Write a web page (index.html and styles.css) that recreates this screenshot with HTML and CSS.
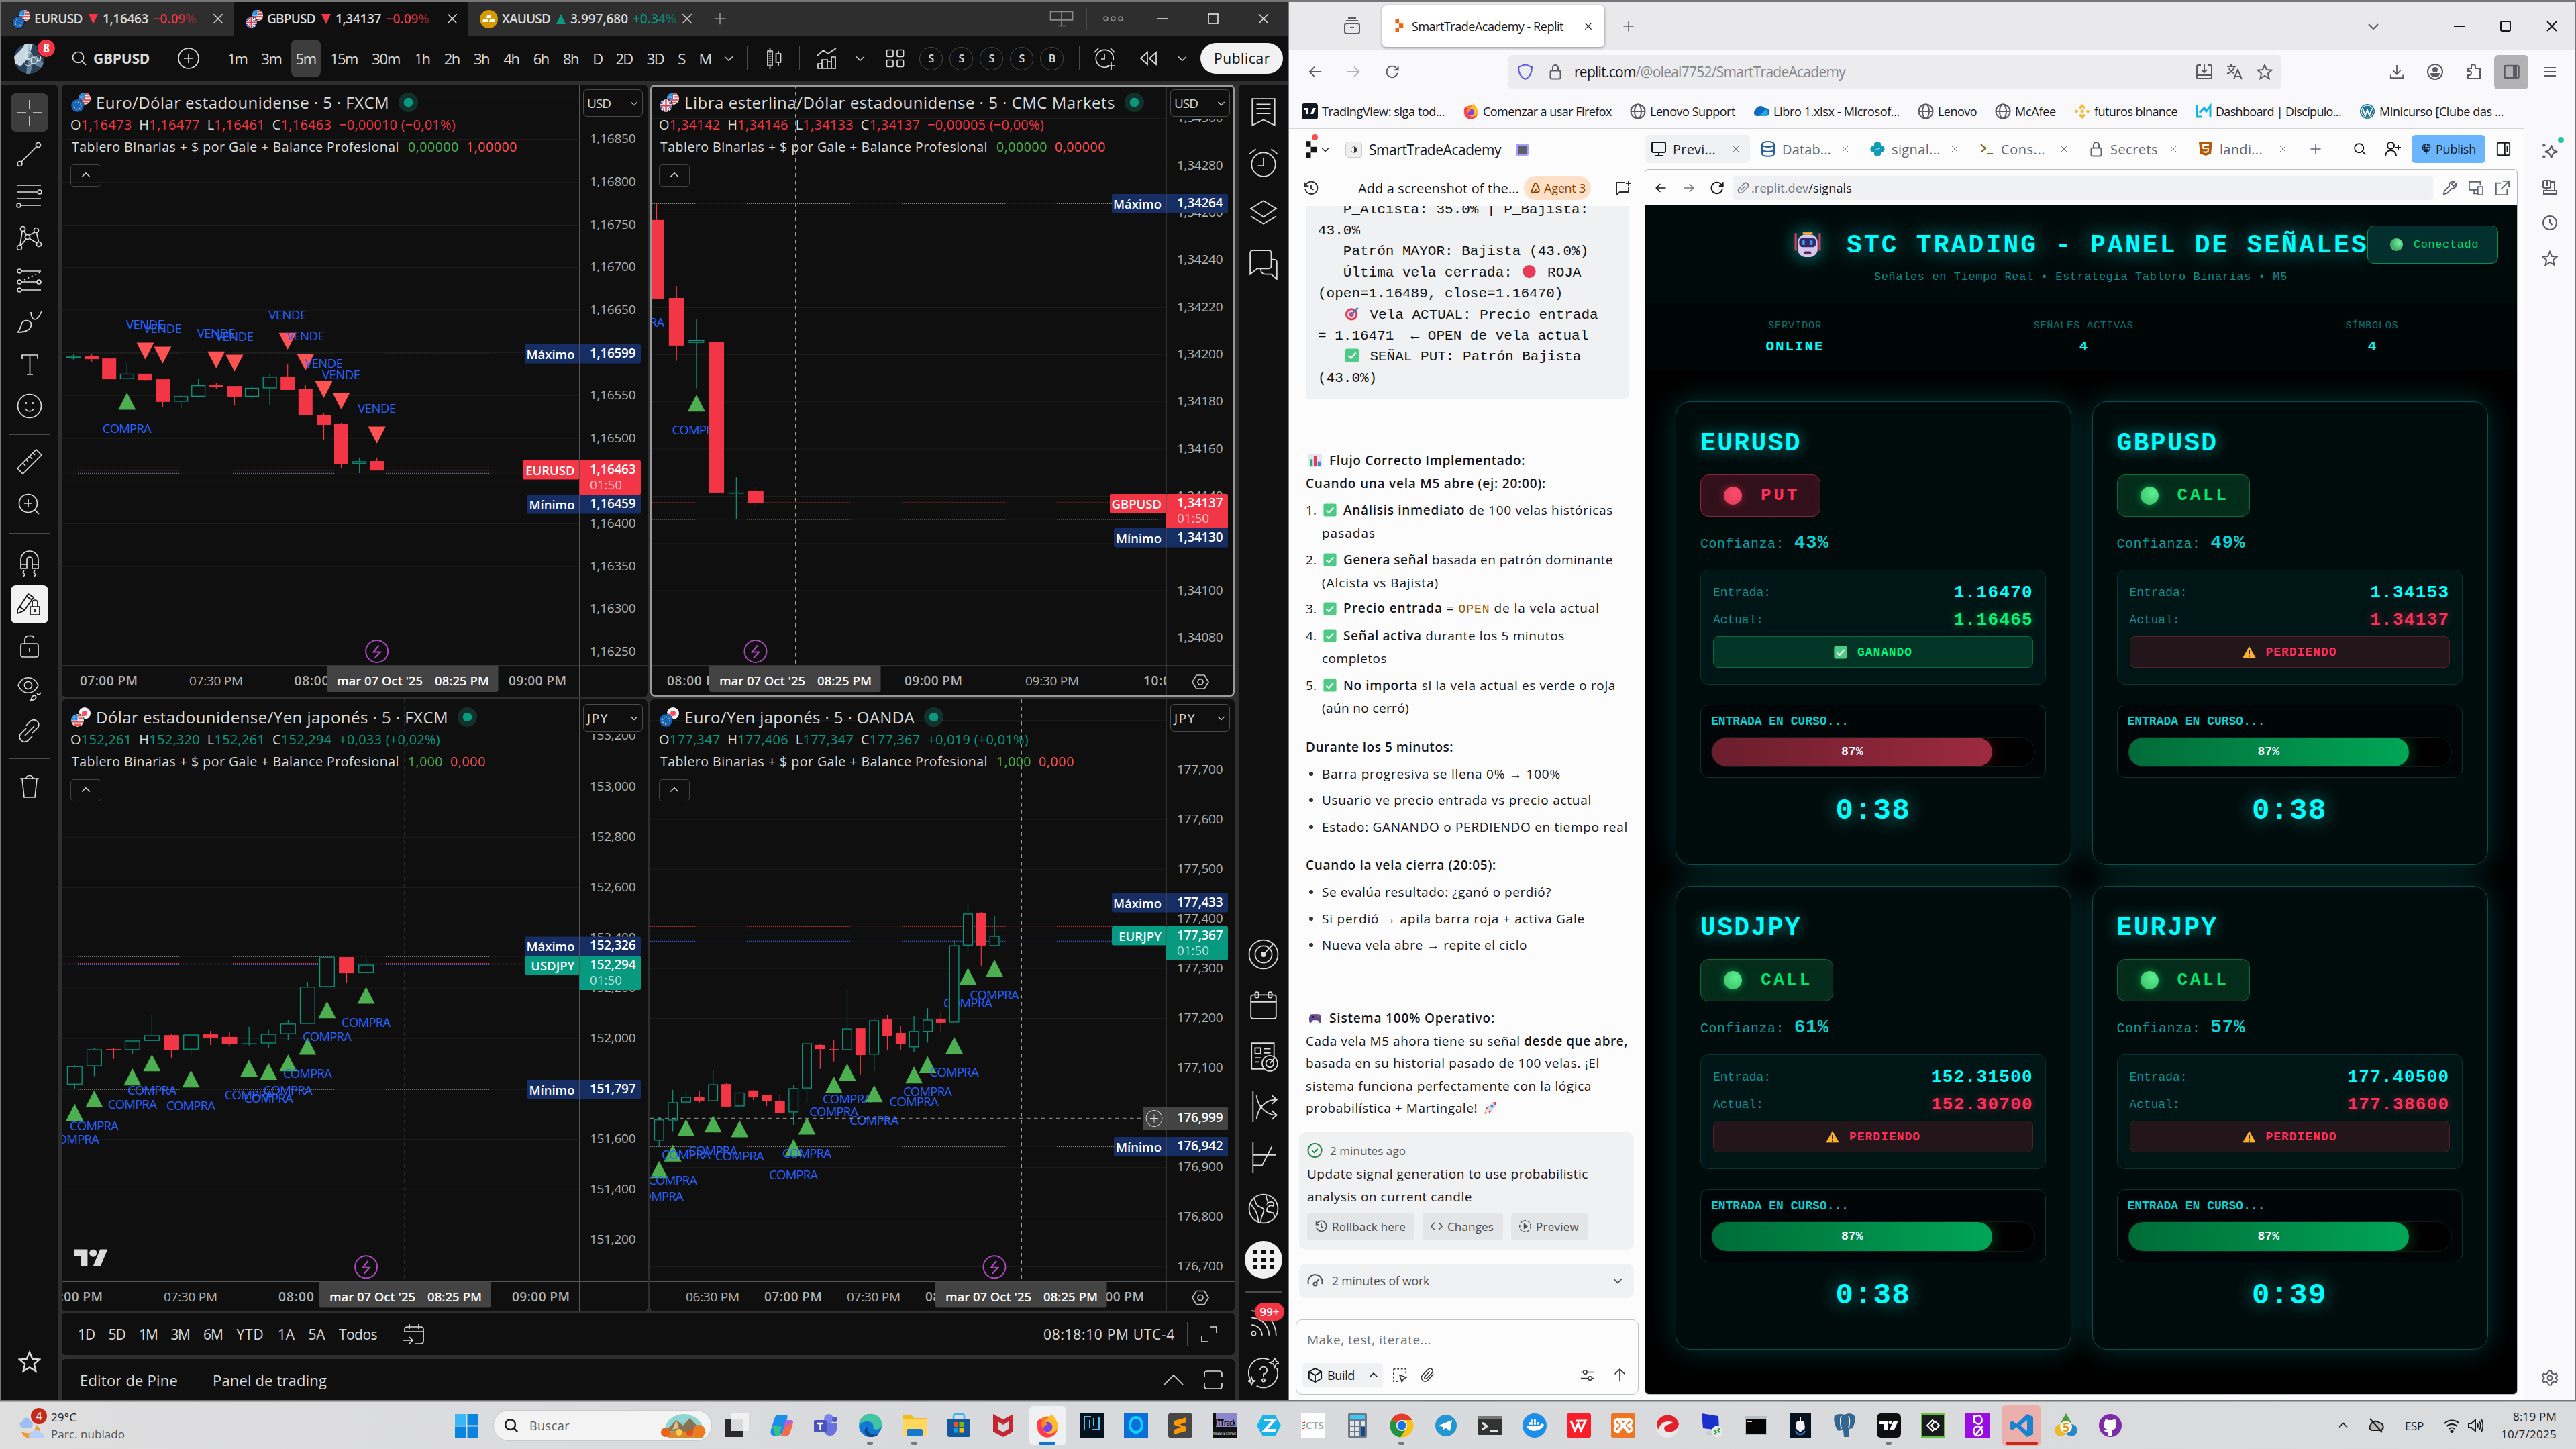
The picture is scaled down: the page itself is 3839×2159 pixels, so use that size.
FILE: index.html
```html
<!DOCTYPE html>
<html lang="es">
<head>
<meta charset="utf-8">
<title>Escritorio de trading</title>
<link rel="stylesheet" href="styles.css">
</head>
<body>
<svg class="defs" width="0" height="0">
<symbol id="x" viewBox="0 0 24 24"><path d="M4 4L20 20M20 4L4 20"/></symbol>
<symbol id="plus" viewBox="0 0 24 24"><path d="M12 2V22M2 12H22"/></symbol>
<symbol id="down" viewBox="0 0 24 24"><path d="M5 9L12 16L19 9"/></symbol>
<symbol id="up" viewBox="0 0 24 24"><path d="M5 15L12 8L19 15"/></symbol>
<symbol id="search" viewBox="0 0 24 24"><circle cx="10.5" cy="10.5" r="8"/><path d="M16 16L22 22"/></symbol>
<symbol id="addc" viewBox="0 0 32 32"><circle cx="16" cy="16" r="15"/><path d="M16 9V23M9 16H23"/></symbol>
<symbol id="left" viewBox="0 0 24 24"><path d="M22 12H3M11 4L3 12L11 20"/></symbol>
<symbol id="right" viewBox="0 0 24 24"><path d="M2 12H21M13 4L21 12L13 20"/></symbol>
<symbol id="reload" viewBox="0 0 24 24"><path d="M20.5 14A9 9 0 1 1 18.5 6L21 8.500M21.500 2.500V9H15"/></symbol>
<symbol id="star" viewBox="0 0 24 24"><path d="M12 2L15 9L22.500 9.600L16.800 14.500L18.600 22L12 18L5.400 22L7.200 14.500L1.500 9.600L9 9Z"/></symbol>
<symbol id="lock" viewBox="0 0 24 24"><rect x="4.500" y="10.500" width="15" height="12" rx="2"/><path d="M8 10V6A4 4 0 0 1 16 6V10"/></symbol>
<symbol id="globe" viewBox="0 0 24 24"><circle cx="12" cy="12" r="10.500"/><ellipse cx="12" cy="12" rx="5" ry="10.500"/><path d="M1.500 12H22.500"/></symbol>
<symbol id="gear" viewBox="0 0 24 24"><circle cx="12" cy="12" r="3.500"/><path d="M10 1.500H14L15 5L18 6.600L21.300 5.600L23 9L20.500 12L23 15L21.300 18.400L18 17.400L15 19L14 22.500H10L9 19L6 17.400L2.700 18.400L1 15L3.500 12L1 9L2.700 5.600L6 6.600L9 5Z"/></symbol>
<symbol id="history" viewBox="0 0 24 24"><path d="M3 8A10 10 0 1 1 2.500 14M2 3V9H8M12 7V13L16 15"/></symbol>
<symbol id="clock" viewBox="0 0 24 24"><circle cx="12" cy="12" r="10"/><path d="M12 6V12L15.500 15"/></symbol>
<symbol id="sparkle" viewBox="0 0 24 24"><path d="M14 4C15 10 17 12 22.500 13C17 14 15 16 14 22C13 16 11 14 5.500 13C11 12 13 10 14 4Z"/><path d="M4 2V6M2 4H6M4 18V22M2 20H6"/></symbol>
<symbol id="us" viewBox="0 0 20 20"><circle cx="10" cy="10" r="10" fill="#f4f4f6"/><path d="M10 2.500H16.500M11 7H19.500M11 12H19.500M2 12H11M4 16.500H16" stroke="#ef5350" stroke-width="2.600"/><path d="M10 0V10H0A10 10 0 0 1 10 0Z" fill="#1e88e5"/><path d="M3 6H9M5 3.500H9M3 8.500H9" stroke="#9fd0f5" stroke-width="1" stroke-dasharray="1 1"/></symbol>
<symbol id="eu" viewBox="0 0 20 20"><circle cx="10" cy="10" r="10" fill="#1565c0"/><circle cx="10" cy="10" r="5.500" fill="none" stroke="#ffeb3b" stroke-width="1.500" stroke-dasharray="1.400 2.900"/></symbol>
<symbol id="gb" viewBox="0 0 20 20"><circle cx="10" cy="10" r="10" fill="#1e5fb4"/><path d="M3 3L17 17M17 3L3 17" stroke="#fff" stroke-width="3"/><path d="M3 3L17 17M17 3L3 17" stroke="#e5404a" stroke-width="1"/><path d="M10 0V20M0 10H20" stroke="#fff" stroke-width="5"/><path d="M10 0V20M0 10H20" stroke="#e5404a" stroke-width="2.600"/></symbol>
<symbol id="jp" viewBox="0 0 20 20"><circle cx="10" cy="10" r="10" fill="#f4f4fa"/><circle cx="10" cy="10" r="4.500" fill="#f7525f"/></symbol>
<symbol id="ok" viewBox="0 0 24 24"><rect x="0.500" y="0.500" width="23" height="23" rx="3" fill="#4ccb85"/><path d="M5.500 12.500L10 17L18.500 7.500" fill="none" stroke="#fff" stroke-width="2.600"/></symbol>
<symbol id="warn" viewBox="0 0 24 24"><path d="M12 2L23 21.500H1Z" fill="#ffb02e" stroke="#ffb02e"/><path d="M12 8.500V15.500M12 17.500V20" stroke="#212121" stroke-width="2.400"/></symbol>
<symbol id="tv" viewBox="0 0 36 28"><path d="M14 22H7V11H0V4H14ZM28 22H20L27.500 4H35.500Z" fill="currentColor"/><circle cx="20" cy="8" r="4" fill="currentColor"/></symbol>
<symbol id="fox" viewBox="0 0 36 36"><circle cx="18" cy="20" r="15.500" fill="#ff7a1f"/><path d="M3 16C4 28 9 35.500 18 35.500S33.500 29 33.500 20C33.500 12 28 4 23 0C23 6 18 7 15 11Z" fill="#ffbd2e"/><path d="M3 12C2 26 8 35.500 18 35.500C27 35.500 32 29 32.500 23C29 30 22 31 17 29C10 26 9 18 12 12L6 8Z" fill="#ff3b56"/><circle cx="18" cy="20" r="7.500" fill="#7a45e6"/><path d="M9 13C14 11 18 14 18 17C15 17 13 19 12 22C9 19 8 16 9 13Z" fill="#ff8a1f"/></symbol>
<symbol id="replit" viewBox="0 0 16 24"><path d="M1 0H8V8H1ZM8 8H16V16H8ZM1 16H8V24H1Z" fill="currentColor"/></symbol>
</svg>
<div class="desktop">

<section class="tvwin">
  <header class="tabs">
    <div class="tab"><span class="pair"><svg><use href="#us"/></svg><svg><use href="#eu"/></svg></span><b class="sym" data-w="72">EURUSD</b><i class="tri dn"></i><b data-w="68">1,16463</b><b class="pct red" data-w="65">−0.09%</b><svg class="ic close"><use href="#x"/></svg></div>
    <div class="tab on"><span class="pair"><svg><use href="#us"/></svg><svg><use href="#gb"/></svg></span><b class="sym" data-w="72">GBPUSD</b><i class="tri dn"></i><b data-w="68">1,34137</b><b class="pct red" data-w="65">−0.09%</b><svg class="ic close"><use href="#x"/></svg></div>
    <div class="tab third"><svg class="gold" viewBox="0 0 27 27"><circle cx="13.500" cy="13.500" r="13.500" fill="#d69a00"/><path d="M10 12L11 8H16L17 12ZM4 18L5 14H12L13 18ZM14 18L15 14H22L23 18Z" fill="#fff"/></svg><b class="sym" data-w="72">XAUUSD</b><i class="tri upw"></i><b data-w="86">3.997,680</b><b class="pct teal" data-w="65">+0.34%</b><svg class="ic close"><use href="#x"/></svg></div>
    <i class="vsep h32"></i><svg class="ic s20 dim newtab"><use href="#plus"/></svg>
    <div class="wctl"><svg class="ic" width="36" height="24" viewBox="0 0 36 24"><path d="M1.500 1.500H34.500V14H1.500ZM18 1.500V22M12 22.500H24M1.500 13H34"/></svg><i class="vsep h32"></i><svg class="ic dots" width="30" height="10" viewBox="0 0 30 10"><circle cx="4" cy="5" r="3"/><circle cx="15" cy="5" r="3"/><circle cx="26" cy="5" r="3"/></svg><svg class="ic lite" width="16" height="16" viewBox="0 0 16 16"><path d="M0 8H16"/></svg><svg class="ic lite" width="16" height="16" viewBox="0 0 16 16"><rect x="1" y="1" width="14" height="14"/></svg><svg class="ic lite" width="16" height="16" viewBox="0 0 16 16"><path d="M1 1L15 15M15 1L1 15"/></svg></div>
  </header>

  <div class="bar">
    <div class="avatar"><svg viewBox="0 0 45 45"><circle cx="22.500" cy="22.500" r="22.500" fill="#2b4358"/><path d="M0 20C6 12 12 10 16 0H28L22 20L10 34L2 30Z" fill="#c9d8e2"/><path d="M22 0L26 18L36 20L44 30L40 36L28 30L24 45H18L20 28Z" fill="#7e9bb0" opacity=".7"/><g fill="none" stroke="#e9f3fa" stroke-width="1"><circle cx="22" cy="18" r="5"/><circle cx="30" cy="25" r="5"/><circle cx="21" cy="28" r="5"/><circle cx="36" cy="22" r="4"/></g></svg><em>8</em></div>
    <svg class="ic s24 srch"><use href="#search"/></svg><b class="tick" data-w="84">GBPUSD</b>
    <svg class="ic plusc"><use href="#addc"/></svg><i class="vsep h36 sa"></i>
    <nav class="tf"><span data-w="29">1m</span><span data-w="30">3m</span><span class="on" data-w="30">5m</span><span data-w="41">15m</span><span data-w="42">30m</span><span data-w="23">1h</span><span data-w="23">2h</span><span data-w="23">3h</span><span data-w="23">4h</span><span data-w="23">6h</span><span data-w="23">8h</span><span data-w="13">D</span><span data-w="25">2D</span><span data-w="25">3D</span><span data-w="10">S</span><span data-w="16">M</span></nav>
    <svg class="ic s20 c1"><use href="#down"/></svg><i class="vsep h36 sb"></i>
    <svg class="ic cndl" width="24" height="32" viewBox="0 0 24 32"><path d="M5.500 0V5M5.500 27V32M2 5H9V27H2ZM18 5V9M18 22V27M14.500 9H21.500V22H14.500Z"/><path d="M5.500 6V26" stroke-width="4" stroke-dasharray="1.500 1.500"/></svg><i class="vsep h36 sc"></i>
    <svg class="ic indi" width="32" height="32" viewBox="0 0 32 32"><path d="M2 12L11 4L18 9L30 1M3 31V24H9V31M9 31V18H17V31M17 31V21H23V31M23 31V14H29V31ZM2 31H30"/></svg><svg class="ic s20 c2"><use href="#down"/></svg>
    <svg class="ic grid4" width="28" height="28" viewBox="0 0 28 28"><rect x="1.500" y="1.500" width="9.500" height="10" rx="2"/><rect x="17" y="1.500" width="9.500" height="10" rx="2"/><rect x="1.500" y="16.500" width="9.500" height="10" rx="2"/><rect x="17" y="16.500" width="9.500" height="10" rx="2"/></svg>
    <div class="rounds"><b>S</b><b>S</b><b>S</b><b>S</b><b>B</b></div><i class="vsep h36 sd"></i>
    <svg class="ic alrm" width="34" height="34" viewBox="0 0 34 34"><path d="M22 29A13 13 0 1 1 29 20M16 10V18H11M1 8L7 2M25 2L31 8M26 22V34M20 28H32"/></svg>
    <svg class="ic rew" width="28" height="22" viewBox="0 0 28 22"><path d="M12 2V20L2 11ZM25 2V20L15 11Z"/></svg><svg class="ic s20 c3"><use href="#down"/></svg>
    <button class="pub"><span data-w="84">Publicar</span></button>
  </div>

  <div class="main">
    <aside class="tools">
      <span class="slot on"><svg class="ic" viewBox="0 0 40 40"><path d="M20 1V15M20 25V39M1 20H15M25 20H39"/></svg></span>
      <span class="slot"><svg class="ic" viewBox="0 0 40 40"><circle cx="5.500" cy="34" r="3.500"/><circle cx="33" cy="6" r="3.500"/><path d="M8 31L30.500 8.500"/></svg></span>
      <span class="slot"><svg class="ic" viewBox="0 0 40 40"><path d="M2 4H37M2 14H32M2 24H37M7 34H37"/><circle cx="35" cy="14" r="3"/><circle cx="4" cy="34" r="3"/></svg></span>
      <span class="slot"><svg class="ic" viewBox="0 0 40 40"><circle cx="10" cy="6" r="3.500"/><circle cx="30" cy="8" r="3.500"/><circle cx="17" cy="18" r="3.500"/><circle cx="34" cy="29" r="3.500"/><circle cx="5" cy="34" r="3.500"/><path d="M9 10L6 30M28 11L19.500 15M20 20.500L31 27M30.500 12L33.500 25M15 21L7 31M12 9L15 15"/></svg></span>
      <span class="slot"><svg class="ic" viewBox="0 0 40 40"><circle cx="5" cy="6" r="3"/><circle cx="5" cy="22" r="3"/><circle cx="34" cy="22" r="3"/><circle cx="5" cy="34" r="3"/><path d="M8 6H37M8 22H31M8 34H37"/><path d="M12 19L35 8" stroke-dasharray="2 4"/></svg></span>
      <span class="slot"><svg class="ic" viewBox="0 0 40 40"><path d="M2 35C6 33 6 27 9 21C12 16 19 17 22 21C24 29 18 35 2 35ZM22 5C22 12 25 16 28 16C32 16 35 11 38 4"/></svg></span>
      <span class="slot"><svg class="ic" viewBox="0 0 40 40"><path d="M9 12V6H32V12M20.500 6V35M16 35H25"/></svg></span>
      <span class="slot"><svg class="ic" viewBox="0 0 40 40"><circle cx="20" cy="20" r="17.500"/><path d="M15 14V17M25 14V17M14 24C16 29 24 29 26 24"/></svg></span>
      <i class="hsep"></i>
      <span class="slot"><svg class="ic" viewBox="0 0 40 40"><path d="M2 30L30 2L38 10L10 38ZM10 22L14 26M15 17L18 20M20 12L24 16M25 7L28 10"/></svg></span>
      <span class="slot"><svg class="ic" viewBox="0 0 40 40"><circle cx="18" cy="19" r="13.500"/><path d="M28 29L34 35M18 13V25M12 19H24"/></svg></span>
      <i class="hsep tall"></i>
      <span class="slot"><svg class="ic" viewBox="0 0 40 40"><path d="M7 27V14A13 13 0 0 1 33 14V27H24V14A4 4 0 0 0 16 14V27ZM7 21H16M24 21H33M12 30L10 33L13 36L11 39M28 30L26 33L29 36L27 39"/></svg></span>
      <span class="slot lit"><svg class="ic" viewBox="0 0 40 40"><path d="M2 28L18 4L26 9L12 29L2 33ZM5 23L12 28M16 8L24 13M21 23H35V35H21ZM24 23V17A4 4 0 0 1 32 17V23M28 27V31"/></svg></span>
      <span class="slot"><svg class="ic" viewBox="0 0 40 40"><rect x="7" y="15" width="26" height="20" rx="3"/><path d="M13 15V9C13 2 25 2 27 7M20 22V28"/></svg></span>
      <span class="slot"><svg class="ic" viewBox="0 0 40 40"><path d="M3 15C10 0 26 0 33 15C26 30 10 30 3 15Z"/><circle cx="18" cy="15" r="5.500"/><path d="M21 38C24 36 22 31 27 30C31 31 32 36 21 38ZM31 27C33 30 35 29 37 26"/></svg></span>
      <span class="slot"><svg class="ic" viewBox="0 0 40 40"><path d="M15 12L22 5C28 1 36 7 33 14L24 23M24 28L17 35C10 39 3 32 6 25L15 16M13 27L27 13"/></svg></span>
      <i class="hsep"></i>
      <span class="slot"><svg class="ic" viewBox="0 0 40 40"><path d="M6 8H34M9 8L12 36H28L31 8M15 8C15 2 25 2 25 8"/></svg></span>
      <span class="slot fav"><svg class="ic"><use href="#star"/></svg></span>
    </aside>

    <div class="center">
      <div class="charts">
        <article class="pane"><svg class="plot" data-chart="eurusd"></svg><div class="legend"><h3><span class="pair"><svg><use href="#us"/></svg><svg><use href="#eu"/></svg></span><span data-w="437">Euro/Dólar estadounidense · 5 · FXCM</span><i class="live"></i></h3><p class="red" data-w="574"><u>O</u>1,16473 &nbsp;<u>H</u>1,16477 &nbsp;<u>L</u>1,16461 &nbsp;<u>C</u>1,16463 &nbsp;−0,00010 (−0,01%)</p><p class="ind"><span data-w="488">Tablero Binarias + $ por Gale + Balance Profesional</span><span class="grn" data-w="76">0,00000</span><span class="rd2" data-w="76">1,00000</span></p><span class="fold"><svg class="ic s20"><use href="#up"/></svg></span></div><span class="cur"><span data-w="35">USD</span><svg class="ic s16"><use href="#down"/></svg></span></article>
        <article class="pane sel"><svg class="plot" data-chart="gbpusd"></svg><div class="legend"><h3><span class="pair"><svg><use href="#us"/></svg><svg><use href="#gb"/></svg></span><span data-w="642">Libra esterlina/Dólar estadounidense · 5 · CMC Markets</span><i class="live"></i></h3><p class="red" data-w="574"><u>O</u>1,34142 &nbsp;<u>H</u>1,34146 &nbsp;<u>L</u>1,34133 &nbsp;<u>C</u>1,34137 &nbsp;−0,00005 (−0,00%)</p><p class="ind"><span data-w="488">Tablero Binarias + $ por Gale + Balance Profesional</span><span class="grn" data-w="76">0,00000</span><span class="rd2" data-w="76">0,00000</span></p><span class="fold"><svg class="ic s20"><use href="#up"/></svg></span></div><span class="cur"><span data-w="35">USD</span><svg class="ic s16"><use href="#down"/></svg></span></article>
        <article class="pane"><svg class="plot" data-chart="usdjpy"></svg><div class="legend"><h3><span class="pair"><svg><use href="#jp"/></svg><svg><use href="#us"/></svg></span><span data-w="525">Dólar estadounidense/Yen japonés · 5 · FXCM</span><i class="live"></i></h3><p class="teal" data-w="551"><u>O</u>152,261 &nbsp;<u>H</u>152,320 &nbsp;<u>L</u>152,261 &nbsp;<u>C</u>152,294 &nbsp;+0,033 (+0,02%)</p><p class="ind"><span data-w="488">Tablero Binarias + $ por Gale + Balance Profesional</span><span class="grn" data-w="52">1,000</span><span class="rd2" data-w="53">0,000</span></p><span class="fold"><svg class="ic s20"><use href="#up"/></svg></span></div><span class="cur"><span data-w="32">JPY</span><svg class="ic s16"><use href="#down"/></svg></span></article>
        <article class="pane"><svg class="plot" data-chart="eurjpy"></svg><div class="legend"><h3><span class="pair"><svg><use href="#jp"/></svg><svg><use href="#eu"/></svg></span><span data-w="343">Euro/Yen japonés · 5 · OANDA</span><i class="live"></i></h3><p class="teal" data-w="551"><u>O</u>177,347 &nbsp;<u>H</u>177,406 &nbsp;<u>L</u>177,347 &nbsp;<u>C</u>177,367 &nbsp;+0,019 (+0,01%)</p><p class="ind"><span data-w="488">Tablero Binarias + $ por Gale + Balance Profesional</span><span class="grn" data-w="52">1,000</span><span class="rd2" data-w="53">0,000</span></p><span class="fold"><svg class="ic s20"><use href="#up"/></svg></span></div><span class="cur"><span data-w="32">JPY</span><svg class="ic s16"><use href="#down"/></svg></span></article>
      </div>
      <div class="ranges"><span data-w="25">1D</span><span data-w="25">5D</span><span data-w="27">1M</span><span data-w="28">3M</span><span data-w="29">6M</span><span data-w="41">YTD</span><span data-w="25">1A</span><span data-w="25">5A</span><span data-w="57">Todos</span><i class="vsep h36"></i><svg class="ic" width="32" height="32" viewBox="0 0 32 32"><path d="M2 13V9Q2 5 6 5H26Q30 5 30 9V26Q30 30 26 30H17M2 12H30M9 1V8M23 1V8M0 25H13M9 20L14 25L9 30"/></svg><span class="clock" data-w="196">08:18:10 PM UTC-4</span><i class="vsep h36"></i><svg class="ic" width="24" height="24" viewBox="0 0 24 24"><path d="M14 1H23V10M1 14V23H10"/></svg></div>
      <div class="dock"><span data-w="146">Editor de Pine</span><span data-w="170">Panel de trading</span><svg class="ic" width="30" height="16" viewBox="0 0 30 16"><path d="M1 15L15 1L29 15"/></svg><svg class="ic" width="28" height="28" viewBox="0 0 28 28"><path d="M1 9V5Q1 1 5 1H23Q27 1 27 5V9M1 19V23Q1 27 5 27H23Q27 27 27 23V19"/></svg></div>
    </div>

    <aside class="widgets">
      <span class="slot"><svg class="ic" viewBox="0 0 44 44"><path d="M6 3H38V41L22 33L6 41ZM12 11H32M12 17H32M12 24H32"/></svg></span>
      <span class="slot"><svg class="ic" viewBox="0 0 44 44"><circle cx="22" cy="24" r="17"/><path d="M22 14V26H14M2 9L11 2M33 2L42 9"/></svg></span>
      <span class="slot"><svg class="ic" viewBox="0 0 44 44"><path d="M22 4L40 15L22 27L4 15ZM4 26L22 37L40 26"/></svg></span>
      <span class="slot"><svg class="ic" viewBox="0 0 44 44"><path d="M3 36V6Q3 2 7 2H29Q33 2 33 6V24Q33 28 29 28H13ZM33 15H36Q41 15 41 19V43L33 36H25Q18 36 18 28"/></svg></span>
      <span class="slot far"><svg class="ic" viewBox="0 0 44 44"><circle cx="22" cy="22" r="20.500"/><circle cx="22" cy="22" r="12"/><circle cx="22" cy="22" r="3" fill="currentColor"/><path d="M22 22L36 7"/></svg></span>
      <span class="slot"><svg class="ic" viewBox="0 0 44 44"><path d="M4 10Q4 7 8 7H36Q40 7 40 10V38Q40 41 36 41H8Q4 41 4 38ZM4 17H40"/><rect x="10" y="3" width="5" height="8" rx="2"/><rect x="29" y="3" width="5" height="8" rx="2"/></svg></span>
      <span class="slot"><svg class="ic" viewBox="0 0 44 44"><path d="M22 40H5V3H37V22M10 10H18V18H10ZM22 11H32M22 17H32M10 24H18M10 30H16"/><circle cx="31" cy="32" r="11"/><circle cx="31" cy="32" r="5.500"/><path d="M31 32L38 24"/></svg></span>
      <span class="slot"><svg class="ic" viewBox="0 0 44 44"><path d="M7 0V44M12 6C14 24 28 34 40 34M12 40C14 26 22 12 40 12M34 6L41 12L34 18M34 28L41 34L34 40"/></svg></span>
      <span class="slot"><svg class="ic" viewBox="0 0 44 44"><path d="M7 0V44M7 18H40M7 33H20L34 6"/></svg></span>
      <span class="slot"><svg class="ic" viewBox="0 0 44 44"><circle cx="22" cy="22" r="20.500"/><path d="M8 7C12 12 10 16 14 18L22 22C24 28 18 30 18 42M3 14C8 22 10 22 12 28C14 32 14 36 15 41M26 3C24 8 30 10 28 14C34 10 38 14 36 18C30 16 26 20 27 26L36 28L38 34"/></svg></span>
      <span class="slot"><svg class="apps" viewBox="0 0 56 56"><circle cx="28" cy="28" r="28" fill="#f0f0f0"/><path d="M13 17H19M25 17H31M37 17H43M13 28H19M25 28H31M37 28H43M13 39H19M25 39H31M37 39H43" stroke="#0f0f0f" stroke-width="6"/></svg></span>
      <i class="hsep w"></i>
      <span class="slot feed"><svg class="ic" viewBox="0 0 44 44"><circle cx="8" cy="37" r="3"/><path d="M5 25A15 15 0 0 1 20 40M5 15A25 25 0 0 1 30 40M5 5A35 35 0 0 1 40 40"/></svg><em>99+</em></span>
      <span class="slot help"><svg class="ic" viewBox="0 0 44 44"><path d="M30 3A20.500 20.500 0 0 0 3 31M12 40A20.500 20.500 0 0 0 41 15M17 18A5 5 0 1 1 22 23V27"/><circle cx="22" cy="32" r="2"/><path d="M38 0L40 5L45 7L40 9L38 14L36 9L31 7L36 5ZM5 28L6.500 32L10 33L6.500 34.500L5 38L3.500 34.500L0 33L3.500 32Z"/></svg></span>
    </aside>
  </div>
</section>

<section class="ffwin">
  <header class="fftabs">
    <svg class="ic k w2 vw" width="26" height="26" viewBox="0 0 26 26"><rect x="2" y="9" width="22" height="15" rx="3"/><path d="M4 5H22M7 1H19M10 15H16"/></svg><i class="lsep"></i>
    <div class="fftab"><svg class="rl"><use href="#replit"/></svg><span data-w="226">SmartTradeAcademy - Replit</span><svg class="ic w2 s12"><use href="#x"/></svg></div>
    <svg class="ic k s18 w2 np"><use href="#plus"/></svg>
    <div class="ffctl"><svg class="ic k w2 s24"><use href="#down"/></svg><svg class="ic w2" width="16" height="16" viewBox="0 0 16 16"><path d="M0 8H16"/></svg><svg class="ic w2" width="16" height="16" viewBox="0 0 16 16"><rect x="1" y="1" width="14" height="14" rx="2"/></svg><svg class="ic w2" width="16" height="16" viewBox="0 0 16 16"><path d="M1 1L15 15M15 1L1 15"/></svg></div>
  </header>
  <div class="ffnav">
    <svg class="ic k w2 s22 n1"><use href="#left"/></svg><svg class="ic k w2 s22 n2 faint"><use href="#right"/></svg><svg class="ic k w2 s22 n3"><use href="#reload"/></svg>
    <div class="url"><svg class="ic w2 shield" width="24" height="24" viewBox="0 0 24 24"><path d="M12 1L22 5C22 14 19 20 12 23C5 20 2 14 2 5Z"/></svg><svg class="ic k w2 s24"><use href="#lock"/></svg><span data-w="404">replit.com<u>/@oleal7752/SmartTradeAcademy</u></span>
      <span class="uright"><svg class="ic k w2 s24" viewBox="0 0 24 24"><path d="M7 2H3Q1 2 1 4V20Q1 22 3 22H21Q23 22 23 20V4Q23 2 21 2H17M1 17H23M12 0V12M8 9L12 13L16 9"/></svg><svg class="ic k w2 s24" viewBox="0 0 24 24"><path d="M1 4H14M7 1V4M12 4C11 10 6 13 1 15M4 7C5 11 9 14 12 14M11 23L17 9L23 23M13 19H21"/></svg><svg class="ic k w2 s24"><use href="#star"/></svg></span></div>
    <span class="uactions"><svg class="ic k w2 s22" viewBox="0 0 24 24"><path d="M12 1V15M6 10L12 16L18 10M2 17V22H22V17"/></svg><svg class="ic k w2 s24" viewBox="0 0 24 24"><circle cx="12" cy="12" r="11"/><circle cx="12" cy="9" r="3" fill="#5b5b66"/><path d="M6 15H18C17 20 7 20 6 15Z" fill="#5b5b66"/></svg><svg class="ic k w2 s24" viewBox="0 0 24 24"><path d="M3 7H8V4A3 3 0 0 1 14 4V7H21V22H3V17H5A3 3 0 0 0 5 11H3Z"/></svg><span class="sbtn"><svg class="ic k w3 s24" viewBox="0 0 24 24"><rect x="1.500" y="3" width="21" height="18" rx="2"/><path d="M17 4V20" stroke-width="6"/></svg></span><svg class="ic k w2 s20" viewBox="0 0 20 20"><path d="M1 4H19M1 10H19M1 16H19"/></svg></span>
  </div>
  <nav class="marks">
    <a><svg viewBox="0 0 24 24"><rect width="24" height="24" rx="4" fill="#131722"/><path d="M10 16H6V10H3V7H10ZM17 16H13L17 7H21Z" fill="#fff"/></svg><span data-w="183">TradingView: siga tod...</span></a>
    <a><svg><use href="#fox"/></svg><span data-w="192">Comenzar a usar Firefox</span></a>
    <a><svg class="ic k w2"><use href="#globe"/></svg><span data-w="127">Lenovo Support</span></a>
    <a><svg viewBox="0 0 24 24"><path d="M5 19A5 5 0 0 1 3 10A8 8 0 0 1 17 7A6 6 0 0 1 19 19Z" fill="#0f6cbd"/><path d="M8 19L19 9A6 6 0 0 1 19 19Z" fill="#28a8ea"/></svg><span data-w="188">Libro 1.xlsx - Microsof...</span></a>
    <a><svg class="ic k w2"><use href="#globe"/></svg><span data-w="58">Lenovo</span></a>
    <a><svg class="ic k w2"><use href="#globe"/></svg><span data-w="61">McAfee</span></a>
    <a><svg viewBox="0 0 24 24"><path d="M12 1L17 6L14.500 8.500L12 6L9.500 8.500L7 6ZM12 9L15 12L12 15L9 12ZM3.500 9L6.500 12L3.500 15L0.500 12ZM20.500 9L23.500 12L20.500 15L17.500 12ZM12 23L17 18L14.500 15.500L12 18L9.500 15.500L7 18Z" fill="#f3ba2f"/></svg><span data-w="124">futuros binance</span></a>
    <a><svg viewBox="0 0 24 24"><path d="M2 3V20H9M6 14L13 7L16 12L22 4V21" fill="none" stroke="#12b5ea" stroke-width="3"/></svg><span data-w="187">Dashboard | Discípulo...</span></a>
    <a><svg viewBox="0 0 24 24"><circle cx="12" cy="12" r="11" fill="#21759b"/><circle cx="12" cy="12" r="9" fill="none" stroke="#fff"/><path d="M5 8L9 18L12 10L15 18L19 8" fill="none" stroke="#fff" stroke-width="2"/></svg><span data-w="185">Minicurso [Clube das ...</span></a>
  </nav>

  <div class="ffbody">
    <div class="replit">
      <section class="agent">
        <div class="ahead"><span class="rlogo"><svg><use href="#replit"/></svg><i></i></span><svg class="ic w2 s16"><use href="#down"/></svg><span class="appi"><i></i></span><span class="name" data-w="197">SmartTradeAcademy</span><i class="cube"></i></div>
        <div class="ahead2"><svg class="ic w2 s22 kk"><use href="#history"/></svg><span class="ttl" data-w="240">Add a screenshot of the...</span><span class="abadge"><svg class="ic w2 s18" viewBox="0 0 20 20"><path d="M3 17L9 3Q11 1 13 4L17 14M3 17H12Q16 17 17 14M9 17Q9 13 13 12"/></svg><span data-w="62">Agent 3</span></span><svg class="ic w2 s24 kk cm" viewBox="0 0 24 24"><path d="M14 4H2V22L7 18H20V11M20 1V9M16 5H24"/></svg></div>
        <div class="chat">
          <pre class="code"><span>   P_Alcista: 35.0% | P_Bajista:
43.0%
   Patrón MAYOR: Bajista (43.0%)
   Última vela cerrada: <i class="e"><svg viewBox="0 0 24 24"><circle cx="12" cy="12" r="11" fill="#e8395a"/></svg></i> ROJA
(open=1.16489, close=1.16470)
   <i class="e"><svg viewBox="0 0 24 24"><circle cx="11" cy="13" r="10.500" fill="#e8395a"/><circle cx="11" cy="13" r="7" fill="#f5e6ea"/><circle cx="11" cy="13" r="4" fill="#e8395a"/><path d="M11 13L22 2" stroke="#2f8ae0" stroke-width="3"/></svg></i> Vela ACTUAL: Precio entrada
= 1.16471  ← OPEN de vela actual
   <i class="e"><svg><use href="#ok"/></svg></i> SEÑAL PUT: Patrón Bajista
(43.0%)</span></pre>
          <hr class="r1">
          <p class="l b t1"><svg class="em" viewBox="0 0 24 24"><rect width="24" height="24" rx="2" fill="#dfe7f2"/><path d="M5 22V10" stroke="#2ea868" stroke-width="5"/><path d="M12 22V4" stroke="#e8395a" stroke-width="5"/><path d="M19 22V14" stroke="#3a86e0" stroke-width="5"/></svg><span data-w="292">Flujo Correcto Implementado:</span></p>
          <p class="l b"><span data-w="358">Cuando una vela M5 abre (ej: 20:00):</span></p>
          <ol>
            <li><p class="l"><svg class="em"><use href="#ok"/></svg><span data-w="402"><b>Análisis inmediato</b> de 100 velas históricas</span></p><p class="l"><span data-w="80">pasadas</span></p></li>
            <li><p class="l"><svg class="em"><use href="#ok"/></svg><span data-w="402"><b>Genera señal</b> basada en patrón dominante</span></p><p class="l"><span data-w="174">(Alcista vs Bajista)</span></p></li>
            <li><p class="l"><svg class="em"><use href="#ok"/></svg><span data-w="382"><b>Precio entrada</b> = <code>OPEN</code> de la vela actual</span></p></li>
            <li><p class="l"><svg class="em"><use href="#ok"/></svg><span data-w="330"><b>Señal activa</b> durante los 5 minutos</span></p><p class="l"><span data-w="97">completos</span></p></li>
            <li><p class="l"><svg class="em"><use href="#ok"/></svg><span data-w="406"><b>No importa</b> si la vela actual es verde o roja</span></p><p class="l"><span data-w="130">(aún no cerró)</span></p></li>
          </ol>
          <p class="l b t2"><span data-w="220">Durante los 5 minutos:</span></p>
          <ul><li><span data-w="356">Barra progresiva se llena 0% → 100%</span></li><li><span data-w="402">Usuario ve precio entrada vs precio actual</span></li><li><span data-w="456">Estado: GANANDO o PERDIENDO en tiempo real</span></li></ul>
          <p class="l b t3"><span data-w="284">Cuando la vela cierra (20:05):</span></p>
          <ul><li><span data-w="342">Se evalúa resultado: ¿ganó o perdió?</span></li><li><span data-w="392">Si perdió → apila barra roja + activa Gale</span></li><li><span data-w="306">Nueva vela abre → repite el ciclo</span></li></ul>
          <hr class="r2">
          <p class="l b t4"><svg class="em" viewBox="0 0 24 24"><path d="M2 20C0 12 2 5 6 5H18C22 5 24 12 22 20C20 22 18 19 16 16H8C6 19 4 22 2 20Z" fill="#5f4b8b"/><circle cx="8" cy="10" r="2" fill="#321b41"/><circle cx="17" cy="9" r="1.500" fill="#e84a6f"/></svg><span data-w="247">Sistema 100% Operativo:</span></p>
          <p class="l"><span data-w="480">Cada vela M5 ahora tiene su señal <b>desde que abre,</b></span></p>
          <p class="l"><span data-w="438">basada en su historial pasado de 100 velas. ¡El</span></p>
          <p class="l"><span data-w="426">sistema funciona perfectamente con la lógica</span></p>
          <p class="l"><span data-w="256">probabilística + Martingale!</span><svg class="em rk" viewBox="0 0 24 24"><path d="M5 15C8 6 14 2 23 1C22 10 18 16 9 19Z" fill="#d9dbe6"/><path d="M16 2L23 1L22 8ZM2 14L8 9L6 15ZM15 16L10 22L9 18Z" fill="#f0335f"/><circle cx="15" cy="9" r="2.500" fill="#3f8fe0"/><path d="M1 23L3 17L7 21Z" fill="#ff9d2e"/></svg></p>
          <div class="commit"><div class="ago"><svg class="ic w2" viewBox="0 0 24 24"><circle cx="12" cy="12" r="11"/><path d="M7.500 12.500L11 15.500L16.500 9.500"/></svg><span data-w="113">2 minutes ago</span></div><p class="l"><span data-w="419">Update signal generation to use probabilistic</span></p><p class="l"><span data-w="246">analysis on current candle</span></p><div class="acts"><button class="b1"><svg class="ic w2 s18"><use href="#history"/></svg><span data-w="110">Rollback here</span></button><button class="b2"><svg class="ic w2 s18" viewBox="0 0 24 24"><path d="M8 5L1 12L8 19M16 5L23 12L16 19"/></svg><span data-w="69">Changes</span></button><button class="b3"><svg class="ic w2 s18" viewBox="0 0 24 24"><circle cx="12" cy="12" r="11" stroke-dasharray="5 3"/><path d="M10 8L16 12L10 16Z" fill="#444"/></svg><span data-w="64">Preview</span></button></div></div>
          <div class="work"><svg class="ic w2" width="24" height="24" viewBox="0 0 24 24"><path d="M2 17A10.500 10.500 0 1 1 22 17M13.500 15L18 9"/><circle cx="12" cy="17" r="2.500"/></svg><span data-w="145">2 minutes of work</span><svg class="ic w2 s20 wd"><use href="#down"/></svg></div>
        </div>
        <div class="prompt"><span class="ph" data-w="185">Make, test, iterate...</span><div class="prow"><span class="build"><svg class="ic w2 s22" viewBox="0 0 24 24"><path d="M12 1L22 6.500V17.500L12 23L2 17.500V6.500ZM2 6.500L12 12L22 6.500M12 12V23"/></svg><span data-w="41">Build</span><svg class="ic w2 s18"><use href="#up"/></svg></span><svg class="ic s22" viewBox="0 0 24 24"><path d="M2 2H22V10M2 2V22H10" stroke-dasharray="3 3"/><path d="M12 12L23 15.500L18 18L15.500 23Z"/></svg><svg class="ic s22 clip" viewBox="0 0 24 24"><path d="M21 10L12 20A6 6 0 0 1 3 12L12 3A4 4 0 0 1 19 8L10 17A2 2 0 0 1 7 14L15 6"/></svg><svg class="ic s22 tune" viewBox="0 0 24 24"><path d="M1 7H5M11 7H23M1 17H13M19 17H23"/><circle cx="8" cy="7" r="3"/><circle cx="16" cy="17" r="3"/></svg><svg class="ic w2 s20 send" viewBox="0 0 24 24"><path d="M12 23V2M3 10L12 1.500L21 10"/></svg></div></div>
      </section>

      <section class="work-area">
        <div class="rtabs">
          <div class="rt on"><svg class="ic w2 s24" viewBox="0 0 24 24"><rect x="2" y="2" width="20" height="15" rx="2"/><path d="M12 17V22M6 22H18"/></svg><span data-w="64">Previ...</span><svg class="ic s12"><use href="#x"/></svg></div>
          <div class="rt"><svg class="ic w2 s24 blue" viewBox="0 0 24 24"><ellipse cx="12" cy="5" rx="9" ry="4"/><path d="M3 5V19C3 24 21 24 21 19V5M3 12C3 17 21 17 21 12"/></svg><span data-w="73">Datab...</span><svg class="ic s12"><use href="#x"/></svg></div>
          <div class="rt"><svg class="s24" viewBox="0 0 24 24"><path d="M7 8V4C7 1 17 1 17 4V10C17 12 7 11 7 14V16H4C0 16 1 8 4 8H12M17 16V20C17 23 7 23 7 20V14C7 12 17 13 17 10V8H20C24 8 23 16 20 16H12" fill="#0d9bb5"/></svg><span data-w="73">signal...</span><svg class="ic s12"><use href="#x"/></svg></div>
          <div class="rt"><svg class="ic w2 s20 olive" viewBox="0 0 20 20"><path d="M1 3L8 9L1 15M10 17H19"/></svg><span data-w="66">Cons...</span><svg class="ic s12"><use href="#x"/></svg></div>
          <div class="rt"><svg class="ic w2 s24"><use href="#lock"/></svg><span data-w="71">Secrets</span><svg class="ic s12"><use href="#x"/></svg></div>
          <div class="rt"><svg class="s20" viewBox="0 0 20 20"><path d="M0 0H20L18 17L10 20L2 17Z" fill="#b85a05"/><path d="M15 4H6L6.500 9H14L13.500 14L10 15L6.500 14" fill="none" stroke="#fff" stroke-width="2"/></svg><span data-w="64">landi...</span><svg class="ic s12"><use href="#x"/></svg></div>
          <svg class="ic s18 w2 rp"><use href="#plus"/></svg>
          <div class="ract"><svg class="ic w2 s20"><use href="#search"/></svg><svg class="ic w2 s24" viewBox="0 0 24 24"><circle cx="9" cy="7" r="5"/><path d="M1 23C1 11 17 11 17 23M20 6V14M16 10H24"/></svg><button class="publish"><svg class="ic w2 s16" viewBox="0 0 24 24"><circle cx="12" cy="9" r="8.500"/><ellipse cx="12" cy="9" rx="3.500" ry="8.500"/><path d="M3 9H21M12 12V24M7 17L12 12L17 17"/></svg><span data-w="60">Publish</span></button><svg class="ic w2 s22" viewBox="0 0 24 24"><rect x="2" y="2" width="20" height="20" rx="2"/><path d="M14 2V22M18 7V17"/></svg></div>
        </div>
        <div class="frame">
          <div class="pbar"><svg class="ic w2 s18 p1"><use href="#left"/></svg><svg class="ic w2 s18 p2 grey"><use href="#right"/></svg><svg class="ic w2 s22 p3"><use href="#reload"/></svg><div class="purl"><svg class="ic w2 s18" viewBox="0 0 24 24"><path d="M9 8L14 3A5 5 0 0 1 21 10L16 15M15 16L10 21A5 5 0 0 1 3 14L8 9M8 16L16 8"/></svg><span data-w="150"><u>.replit.dev</u>/signals</span></div><span class="pact"><svg class="ic w2 s22" viewBox="0 0 24 24"><path d="M2 22L3 17L11 9C10 4 14 1 19 2L15 6L18 9L22 5C23 10 20 13 15 13L7 21Z"/></svg><svg class="ic w2 s22" viewBox="0 0 24 24"><path d="M13 15H1V2H19V8M7 21H13M9 15V21M15 10H23V23H15Z"/></svg><svg class="ic w2 s22" viewBox="0 0 24 24"><path d="M10 4H2V23H20V14M13 1H23V11M23 1L10 14"/></svg></span></div>
          <div class="app">
            <header class="hero"><h1><svg class="robot" viewBox="0 0 38 38"><path d="M2 3V28M36 3V28" stroke="#d8385e" stroke-width="3"/><rect x="5" y="5" width="28" height="32" rx="11" fill="#d9c4ea"/><path d="M12 2H26V5H12Z" fill="#f7a928"/><rect x="7" y="10" width="24" height="13" rx="5" fill="#38296b"/><rect x="11" y="13" width="4" height="7" rx="1.500" fill="#2c9df0"/><rect x="22" y="13" width="4" height="7" rx="1.500" fill="#2c9df0"/><rect x="14" y="29" width="10" height="4" rx="1.500" fill="#4d2b55"/></svg><span data-w="778">STC TRADING - PANEL DE SEÑALES</span></h1><p data-w="616">Señales en Tiempo Real • Estrategia Tablero Binarias • M5</p><span class="conn"><i class="ball g"></i><span data-w="97">Conectado</span></span></header>
            <div class="stats"><div><p data-w="80">SERVIDOR</p><b data-w="87">ONLINE</b></div><div><p data-w="149">SEÑALES ACTIVAS</p><b>4</b></div><div><p data-w="79">SÍMBOLOS</p><b>4</b></div></div>
            <div class="cards" id="cards"></div>
          </div>
        </div>
      </section>
    </div>
    <aside class="ffside"><span class="spk"><svg class="ic k w2 s26"><use href="#sparkle"/></svg><i></i></span><svg class="ic k w2 s24" viewBox="0 0 24 24"><rect x="2" y="2" width="11" height="11" rx="2"/><path d="M8 2V10M13 4H19V18M3 22H22V17H3ZM7 13V17"/></svg><svg class="ic k w2 s24"><use href="#clock"/></svg><svg class="ic k w2 s24"><use href="#star"/></svg><svg class="ic k w2 s24 cog"><use href="#gear"/></svg></aside>
  </div>
</section>
</div>

<footer class="taskbar">
  <div class="weather"><svg viewBox="0 0 42 42"><path d="M6 24C0 24 0 15 6 15C6 8 16 8 17 14C22 14 22 24 17 24Z" fill="#9fbdf2"/><path d="M26 20C24 34 14 34 4 30C8 44 28 44 32 26Z" fill="#f09a2a"/><path d="M20 40C12 40 14 31 20 32C22 24 32 26 32 32C40 32 38 40 34 40Z" fill="#b9cff7"/></svg><em>4</em><div class="temp"><p data-w="38">29°C</p><p class="sub" data-w="110">Parc. nublado</p></div></div>
  <svg class="start" viewBox="0 0 36 36"><path d="M0 0H17V17H0ZM19 0H36V17H19ZM0 19H17V36H0ZM19 19H36V36H19Z" fill="#0a84e0"/><path d="M0 0H17V17H0Z" fill="#38b6f5"/></svg>
  <div class="find"><svg class="ic w3 s22"><use href="#search"/></svg><span data-w="60">Buscar</span><svg class="pic" viewBox="0 0 74 40"><path d="M8 32C8 14 20 4 37 3C54 4 66 14 68 32Z" fill="#8ed6d0"/><path d="M10 28L26 12L36 20L46 9L66 30Z" fill="#8a7355"/><path d="M26 12L30 24L20 26Z" fill="#d9c08a"/><path d="M4 30H70L64 39H16Z" fill="#d9892b"/><circle cx="10" cy="30" r="7" fill="#e8641b"/><circle cx="60" cy="28" r="9" fill="#ef7a1f"/><circle cx="30" cy="30" r="5" fill="#ffc94a"/><circle cx="46" cy="31" r="5" fill="#e0501e"/></svg></div>
  <div class="pins" id="pins">
    <span><svg viewBox="0 0 36 36"><rect x="0" y="9" width="26" height="26" fill="#2a2a2a"/><rect x="9" y="0" width="26" height="26" fill="#f3f3f3" opacity=".88"/></svg></span>
    <span><svg viewBox="0 0 36 36"><path d="M12 2H24Q28 2 26 8L20 26Q18 33 12 33H6Q0 33 2 24L7 8Q9 2 12 2Z" fill="#1b8fe8"/><path d="M4 18L9 34H14L18 20Z" fill="#38c08a"/><path d="M24 34H14Q18 33 20 26L24 10H30Q36 10 34 18L30 30Q28 34 24 34Z" fill="#f26a4f"/><path d="M20 26L24 10H30Q35 10 35 14L24 18Z" fill="#b45fe0"/></svg></span>
    <span><svg viewBox="0 0 36 36"><circle cx="22" cy="8" r="7" fill="#7b83eb"/><circle cx="31" cy="9" r="4" fill="#5059c9"/><path d="M14 14H34V24Q32 33 24 33Q16 33 14 24Z" fill="#6a70dc"/><rect x="0" y="10" width="19" height="18" rx="2" fill="#4b53bc"/><path d="M5 15H14M9.500 15V24" stroke="#fff" stroke-width="2.500"/></svg></span>
    <span class="run"><svg viewBox="0 0 36 36"><circle cx="18" cy="18" r="17" fill="#1477d4"/><path d="M1 15C4 3 14 0 22 1C32 3 36 11 35 18C33 24 26 25 22 22C25 16 18 11 12 12C7 12 3 15 1 19Z" fill="#3ec6a0"/><path d="M14 20C13 30 22 34 31 30C27 35 20 36 14 34C8 30 8 22 14 20Z" fill="#0c4a8f"/></svg></span>
    <span class="run"><svg viewBox="0 0 36 36"><path d="M0 2H13L17 7H36V34H0Z" fill="#f6b91c"/><path d="M0 9H36V34H0Z" fill="#ffd75e"/><rect x="6" y="23" width="24" height="11" rx="3" fill="#1479cf"/></svg></span>
    <span><svg viewBox="0 0 36 36"><path d="M10 9V4Q10 1 13 1H23Q26 1 26 4V9" fill="none" stroke="#35b7f0" stroke-width="2.500"/><path d="M1 8H35V32Q35 35 32 35H4Q1 35 1 32Z" fill="#15579c"/><path d="M10 13H17V20H10Z" fill="#f25022"/><path d="M18.500 13H25.500V20H18.500Z" fill="#7fba00"/><path d="M10 21.500H17V28.500H10Z" fill="#00a4ef"/><path d="M18.500 21.500H25.500V28.500H18.500Z" fill="#ffb900"/></svg></span>
    <span><svg viewBox="0 0 36 36"><path d="M3 1L18 9L33 1V27L18 35L3 27ZM10 12V23L18 28L26 23V12L18 17Z" fill="#c3272f" fill-rule="evenodd"/></svg></span>
    <span class="act"><svg><use href="#fox"/></svg></span>
    <span><svg viewBox="0 0 36 36"><rect width="36" height="36" fill="#04121f"/><path d="M7 24V5H17M29 5V24H19M15 22V10M21 19V7" fill="none" stroke="#4cc3e8" stroke-width="2"/></svg></span>
    <span><svg viewBox="0 0 36 36"><rect width="36" height="36" fill="#0a6fd6"/><ellipse cx="18" cy="17" rx="9" ry="11" fill="none" stroke="#0fd0ff" stroke-width="4"/></svg></span>
    <span><svg viewBox="0 0 36 36"><rect width="36" height="36" rx="3" fill="#474747"/><path d="M27 6V13L17 16.500L27 20V26L9 31V24L19 20.500L9 17V11Z" fill="#ff9800"/></svg></span>
    <span><svg viewBox="0 0 36 36"><rect width="36" height="36" fill="#111"/><rect x="5" width="31" height="20" fill="#8d86c8"/><text x="1" y="19" textLength="34" font-size="14" font-weight="700" lengthAdjust="spacingAndGlyphs">HTTrack</text><text x="1" y="32" textLength="34" lengthAdjust="spacingAndGlyphs" font-size="8" fill="#fff">WEBSITE COPIER</text></svg></span>
    <span><svg viewBox="0 0 36 36"><path d="M9 2H27L36 18L27 34H9L0 18Z" fill="#18b4ea"/><path d="M10 10H26L12 25H28" fill="none" stroke="#fff" stroke-width="4"/></svg></span>
    <span><svg viewBox="0 0 36 36"><rect width="36" height="36" fill="#fff"/><text x="7" y="23" font-size="14" font-weight="700" fill="#aaa" textLength="27" lengthAdjust="spacingAndGlyphs">CTS</text><path d="M1 15L6 13M1 23L6 21" stroke="#e23" stroke-width="1.600"/><path d="M1 19L6 17" stroke="#2a6" stroke-width="1.600"/></svg></span>
    <span><svg viewBox="0 0 36 36"><rect x="4" width="28" height="36" rx="2" fill="#6d7a86"/><rect x="7" y="3" width="22" height="6" fill="#3fc8f4"/><path d="M7 15H13M15 15H21M23 15H29M7 23H13M15 23H21M7 31H13M15 31H21" stroke="#dfe5ea" stroke-width="6"/><rect x="23" y="20" width="6" height="14" fill="#134a8e"/></svg></span>
    <span class="run"><svg viewBox="0 0 36 36"><circle cx="18" cy="18" r="17.500" fill="#fbc116"/><path d="M18 18L2.800 9.200A17.500 17.500 0 0 1 33.500 10H18Z" fill="#e33b2e"/><path d="M18 18L2.800 9.200A17.500 17.500 0 0 0 16 35.400L25 22Z" fill="#229342"/><circle cx="18" cy="18" r="8" fill="#fff"/><circle cx="18" cy="18" r="6.500" fill="#1a73e8"/></svg></span>
    <span><svg viewBox="0 0 36 36"><circle cx="18" cy="18" r="16" fill="#2197d3"/><path d="M7 18L27 10L24 26L17 21L14 25L13 20Z" fill="#fff"/></svg></span>
    <span><svg viewBox="0 0 36 36"><rect y="4" width="36" height="28" rx="1" fill="#333"/><rect y="4" width="36" height="5" fill="#777"/><path d="M6 14L13 19L6 24M17 26H29" fill="none" stroke="#e6e6e6" stroke-width="3"/></svg></span>
    <span><svg viewBox="0 0 36 36"><circle cx="18" cy="18" r="18" fill="#1b8fea"/><path d="M6 18H26C28 14 30 15 32 17C28 27 9 30 6 18Z" fill="#fff"/><path d="M9 15H25M13 11H21" stroke="#fff" stroke-width="3.500" stroke-dasharray="3 1"/></svg></span>
    <span><svg viewBox="0 0 36 36"><rect width="36" height="36" rx="3" fill="#fa1e2a"/><path d="M6 11L12 25L17 15L21 25L28 11H14" fill="none" stroke="#fff" stroke-width="3.200"/></svg></span>
    <span><svg viewBox="0 0 36 36"><rect width="36" height="36" rx="3" fill="#ee7623"/><path d="M10 9L26 27M26 9L10 27" stroke="#fff" stroke-width="4.500"/><path d="M12 17A4.500 4.500 0 1 1 12 9H24A4.500 4.500 0 1 1 24 17M12 19A4.500 4.500 0 1 0 12 27M24 19A4.500 4.500 0 1 1 24 27" fill="none" stroke="#fff" stroke-width="3.500"/></svg></span>
    <span><svg viewBox="0 0 36 36"><circle cx="18" cy="19" r="17" fill="#e9e9ea"/><path d="M2 15A17 17 0 0 1 35 16C33 28 15 32 13 22C14 16 24 17 26 13C16 10 8 13 4 24Z" fill="#e3202b"/></svg></span>
    <span><svg viewBox="0 0 36 36"><path d="M3 0L28 4L29 25L5 22Z" fill="#1b2fcf"/><path d="M9 26H24V32H9Z" fill="#c9ccd2"/><circle cx="26" cy="27" r="8.500" fill="#e6e9ea"/><path d="M22 25L25 28L22 31M30 22L27 25L30 28" stroke="#2ca03c" stroke-width="2" fill="none"/></svg></span>
    <span><svg viewBox="0 0 36 36"><rect x="1" y="4" width="34" height="28" fill="#b9bec4"/><rect x="3" y="8" width="30" height="22" fill="#050505"/><path d="M5 12H12" stroke="#ddd" stroke-width="2"/></svg></span>
    <span><svg viewBox="0 0 36 36"><rect x="2" width="32" height="36" fill="#06121f"/><path d="M12 14C12 10 24 10 24 14L25 22L18 28L11 22Z" fill="#eef2f5"/><path d="M11 26C14 33 22 33 25 26" stroke="#2e7fd8" fill="none" stroke-width="2"/><path d="M18 5V11" stroke="#fff" stroke-width="2"/></svg></span>
    <span><svg viewBox="0 0 36 36"><path d="M3 4C10 -1 16 2 18 2C24 -1 32 0 34 6C34 14 31 19 30 22L25 23L24 35H17L16 24L9 26C3 20 1 8 3 4Z" fill="#336791"/><path d="M13 4C10 12 13 18 13 23M24 4C27 12 25 16 24 22" stroke="#fff" fill="none" stroke-width="1.600"/></svg></span>
    <span class="run"><svg viewBox="0 0 36 36"><rect width="36" height="36" rx="6" fill="#101010"/><path d="M16 24H10V16H4V11H16ZM26 24H19L25 11H32Z" fill="#fff"/><circle cx="20" cy="13.500" r="2.500" fill="#fff"/></svg></span>
    <span><svg viewBox="0 0 36 36"><rect width="36" height="36" fill="#5fc43a"/><rect x="2" y="2" width="32" height="32" fill="#1b1b1f"/><path d="M17 10L9 18L17 26L20 23L15 18L20 13ZM21 12L27 18L21 24" fill="none" stroke="#fff" stroke-width="2"/></svg></span>
    <span><svg viewBox="0 0 36 36"><rect width="36" height="36" fill="#9a0ce6"/><path d="M20 3C10 4 12 15 20 16C28 14 24 3 20 3ZM13 3V15M20 33C10 34 10 20 18 19C26 20 28 32 20 33ZM26 19L14 33" fill="none" stroke="#fff" stroke-width="2.500"/></svg></span>
    <span class="alert"><svg viewBox="0 0 36 36"><path d="M26 1L35 5V31L26 35L10 20L4 25L1 23V13L4 11L10 16ZM26 10L16 18L26 26Z" fill="#1684d0" fill-rule="evenodd"/></svg></span>
    <span><svg viewBox="0 0 36 36"><path d="M18 0L26 14H10Z" fill="#4a9a3c"/><circle cx="10" cy="25" r="9" fill="#e9b92a"/><circle cx="26" cy="25" r="9" fill="#2a86c8"/><circle cx="18" cy="20" r="9" fill="#f5f5ef"/><text x="13" y="27" font-size="18" font-weight="700" fill="#e39a17">5</text></svg></span>
    <span><svg viewBox="0 0 36 36"><circle cx="18" cy="18" r="17" fill="#7a2da6"/><path d="M11 8L15 10H21L25 8C27 12 27 14 27 17C27 23 23 24 21 24V33H14V28C10 29 9 25 8 24L14 24C10 23 8 21 8 16C9 14 10 11 11 8Z" fill="#fff"/></svg></span>
  </div>
  <div class="tray"><svg class="ic w2 s20"><use href="#up"/></svg><svg class="ic w2 s24 od" viewBox="0 0 24 24"><path d="M5 19A5 5 0 0 1 4 11A8 8 0 0 1 17 8A6 6 0 0 1 20 19Z" fill="#bbb"/><path d="M3 2L21 22"/></svg><span data-w="28">ESP</span><svg class="ic w2 s24 wf" viewBox="0 0 24 24"><path d="M1 9A16 16 0 0 1 23 9M4.500 13A11 11 0 0 1 19.500 13M8 17A6 6 0 0 1 16 17"/><circle cx="12" cy="20.500" r="1.500" fill="#222"/></svg><svg class="ic w2 s24" viewBox="0 0 24 24"><path d="M2 9V15H6L12 20V4L6 9ZM15 9Q17 12 15 15M18 6Q22 12 18 18M21 3Q26 12 21 21"/></svg><div class="when"><p data-w="65">8:19 PM</p><p data-w="83">10/7/2025</p></div></div>
</footer>
<script src="app.js"></script>
</body>
</html>
```
FILE: styles.css
```css
*{box-sizing:border-box;margin:0;padding:0}
html,body{width:3839px;height:2159px;overflow:hidden}
body{font-family:"Open Sans","Noto Sans",sans-serif;display:flex;flex-direction:column;background:#dadbdd}
i,em{font-style:normal}u{text-decoration:none}
button{border:0;font:inherit}
svg{display:block;flex:none}
.defs{position:absolute}
[data-w]{white-space:nowrap;display:inline-block;flex:none}
.ic{fill:none;stroke:currentColor;stroke-width:1.7}
.w2{stroke-width:2}.w3{stroke-width:2.6}
.s12{width:14px;height:14px}.s16{width:16px;height:16px}.s18{width:18px;height:18px}.s20{width:20px;height:20px}.s22{width:22px;height:22px}.s24{width:24px;height:24px}.s26{width:26px;height:26px}
.k{color:#5b5b66}
.red{color:#f23645}.teal{color:#089981}
.desktop{display:flex;height:2089px;border-bottom:1px solid #aaa}

/* charting window */
.tvwin{width:1921px;border:2px solid #767676;border-top-width:3px;background:#2e2e2e;color:#dbdbdb;display:flex;flex-direction:column}
.tabs{height:50px;display:flex;align-items:center;font-size:19px;flex:none}
.tabs b{font-weight:600}
.tab{width:347px;height:50px;display:flex;align-items:center;padding:0 14px 0 16px}
.tab.on{width:349px;background:#0f0f0f}
.tab.third{padding:0 10px 0 17px;width:346px}
.pair{position:relative;width:27px;height:27px;flex:none}
.pair svg{position:absolute;width:17px;height:17px;right:0;top:0}
.pair svg+svg{left:0;top:9px;width:19px;height:19px;border:1px solid #111;border-radius:50%}
.sym{margin:0 9px 0 6px}
.tri{border:7.500px solid transparent;margin-right:7px}
.tri.dn{border-top:15px solid #f23645;border-bottom:0}
.tri.upw{border-bottom:15px solid #089981;border-top:0}
.gold{width:27px;height:27px}
.pct{margin-left:7px;-webkit-mask:linear-gradient(90deg,#000 55%,#0006);mask:linear-gradient(90deg,#000 55%,#0006)}
.close{width:20px;height:20px;margin-left:auto;color:#e0e0e0}
.vsep{width:1px;background:#4a4a4a;flex:none}.h32{height:32px}.h36{height:36px}
.dim{color:#9a9a9a}
.newtab{margin-left:18px}
.wctl{margin-left:auto;margin-right:28px;display:flex;align-items:center;color:#8c8c8c}
.wctl .vsep{margin:0 24px 0 19px}
.lite{color:#dbdbdb;margin-left:59px}
.dots+.lite{margin-left:51px}
.bar{height:67px;background:#0f0f0f;display:flex;align-items:center;font-size:22px;flex:none;font-weight:500;padding-top:1px}
.avatar{position:relative;margin-left:19px;width:45px;height:45px}
.avatar svg{width:45px;height:45px}
.avatar em{position:absolute;left:34px;top:-7px;width:28px;height:28px;border-radius:50%;background:#f23645;border:1px solid #0f0f0f;color:#fff;font:700 17px/26px "Open Sans",sans-serif;text-align:center}
.srch{margin-left:40px}.tick{margin-left:9px;font-size:21px}
.plusc{width:32px;height:32px;margin-left:42px}
.sa{margin:0 18px 0 23px}
.tf{display:flex;gap:21.300px;align-items:center}
.tf .on{position:relative;z-index:0}
.tf .on::before{content:"";position:absolute;z-index:-1;left:-7px;right:-7px;top:-13px;bottom:-13px;background:#3d3d3d;border-radius:8px}
.c1{margin-left:19px}.sb{margin-left:17px}.cndl{margin-left:28px}.sc{margin-left:25px}.indi{margin-left:24px}.c2{margin-left:24px}.grid4{margin-left:28px}
.rounds{display:flex;gap:10px;margin-left:22px}
.rounds b{width:35px;height:35px;border:1px solid #4a4a4a;border-radius:50%;font-size:16px;line-height:33px;text-align:center;font-weight:600}
.sd{margin-left:23px}.alrm{margin-left:21px}.rew{margin-left:34px}.c3{margin-left:26px}
.pub{margin-left:17px;width:123px;height:46px;border-radius:23px;background:#f2f2f2;color:#0f0f0f;font-size:21px}
.main{flex:1;display:flex;gap:6px;padding-top:6px;min-height:0}
.tools{width:84px;background:#0f0f0f;border-radius:0 6px 0 0;display:flex;flex-direction:column;align-items:center;padding-top:10px}
.slot{height:62.600px;width:56px;display:flex;align-items:center;justify-content:center;flex:none;position:relative}
.tools .slot svg{width:40px;height:40px}
.slot.on,.slot.lit{background:#3d3d3d;border-radius:8px;background-clip:content-box}
.slot.on{height:57px;margin:3px 0 2.600px}
.slot.lit{height:57px;margin:.500px 0 3.500px;background:#f2f2f2;color:#0f0f0f}
.hsep{width:60px;height:2px;background:#4a4a4a;margin:9px 0;flex:none}
.hsep.tall{margin:12px 0 13px}
.fav{margin-top:auto;margin-bottom:26px}
.fav svg{width:34px!important}
.center{width:1748px;display:flex;flex-direction:column}
.charts{display:grid;grid-template-columns:873px 871px;grid-template-rows:912px 912px;gap:4px}
.pane{position:relative;background:#0f0f0f;border-radius:6px;overflow:hidden}
.pane.sel::after{content:"";position:absolute;inset:0;border:3px solid #9a9a9a;border-radius:6px}
.plot{position:absolute;inset:0;width:100%;height:100%}
.plot text{font-family:"Open Sans","Noto Sans",sans-serif;font-size:19px;fill:#b2b2b2}
.plot .sig{fill:#2962ff;font-size:18.500px}
.plot .w{fill:#fff;font-weight:600;font-size:18.500px}
.plot .pw{fill:#fff;font-weight:600}
.plot .cd{fill:#fff;opacity:.7}
.legend{position:relative;padding:11px 0 0 13px}
.legend h3{display:flex;align-items:center;font-weight:400;font-size:24px;height:30px}
.legend .pair{width:30px;height:29px;margin-right:8px}
.legend .pair svg{width:18px;height:18px}.legend .pair svg+svg{top:9px;width:21px;height:21px}
.live{width:29px;height:29px;border-radius:50%;margin-left:14px;background:radial-gradient(circle,#089981 0 6.500px,#12312b 7px)}
.legend p{font-size:20px;height:34px;line-height:34px;margin-top:1.500px;display:flex}
.legend p[data-w]{display:inline-block;white-space:pre}
.legend u{color:#dbdbdb}
.legend .ind{gap:13px;margin-left:2px;margin-top:-1px;font-size:19.500px;font-weight:500}
.ind .rd2{margin-left:-2px}
.grn{color:#4caf50}.rd2{color:#ff5252}
.fold{width:46px;height:33px;border:1px solid #434343;border-radius:5px;display:flex;align-items:center;justify-content:center;margin-top:9px}
.cur{position:absolute;right:7px;top:7px;width:89px;height:41px;border:1px solid #4a4a4a;border-radius:6px;display:flex;align-items:center;justify-content:space-between;padding:0 4px 0 5px;font-size:19px}
.ranges{height:63px;margin-top:2px;background:#0f0f0f;border-radius:6px;display:flex;align-items:center;gap:20.500px;padding:0 26px 0 24px;font-size:21px}
.ranges .vsep{margin-left:-3px}.clock{margin-left:auto}
.dock{height:61px;margin-top:6px;background:#0f0f0f;border-radius:6px 6px 0 0;display:flex;align-items:center;padding:0 18px 0 27px;font-size:22px;gap:52px}
.dock svg:nth-of-type(1){margin-left:auto;margin-right:-22px}
.widgets{width:73px;background:#0f0f0f;border-radius:6px 0 0 0;display:flex;flex-direction:column;align-items:center;padding-top:3px}
.widgets .slot{height:75.800px;width:73px}
.widgets .ic{width:46px;height:46px}
.far{margin-top:952px}
.apps{width:56px;height:56px}
.hsep.w{width:56px;margin:9px 0}
.feed{margin-top:-2px}
.feed em{position:absolute;left:24px;top:8px;width:44px;height:27px;border-radius:14px;background:#f23645;color:#fff;font:600 17px/27px "Open Sans",sans-serif;text-align:center}

/* browser window */
.ffwin{flex:1;border-top:3px solid #767676;border-right:2px solid #767676;border-bottom:2px solid #767676;background:#f9f9fb;color:#15141a;display:flex;flex-direction:column;font-size:18px}
.fftabs{height:71px;background:#e9e9eb;display:flex;align-items:center;flex:none}
.vw{margin-left:81px}.lsep{width:1px;height:71px;background:#b9b9bd;margin:0 6px 0 25px}
.fftab{width:331px;height:62px;background:#fff;border-radius:6px;box-shadow:0 1px 4px #0006;display:flex;align-items:center;padding:0 17px}
.rl{width:16px;height:19px;color:#f26207;margin-right:11px}
.fftab .s12{margin-left:auto}
.np{margin-left:27px}
.ffctl{margin-left:auto;display:flex;align-items:center;padding-right:26px;gap:53px}
.ffctl svg:first-child{margin-right:55px}
.ffnav{height:66px;display:flex;align-items:center;flex:none}
.n1{margin-left:28px}.n2{margin-left:35px}.n3{margin-left:36px}.faint{opacity:.45}
.url{margin-left:162px;width:1152px;height:51px;background:#ececee;border-radius:6px;display:flex;align-items:center;padding:0 13px;font-size:21px}
.shield{color:#5a57e8}
.url .s24{margin:0 16px 0 21px}.url u{color:#85858b}
.uright{margin-left:auto;display:flex;gap:21px}.uright .s24{margin:0}
.uactions{display:flex;align-items:center;gap:34px;margin-left:161px}
.sbtn{width:51px;height:51px;border-radius:6px;background:#b3b3b5;display:flex;align-items:center;justify-content:center;margin:0 -14px 0 -16px}
.sbtn+svg{margin-left:2px}
.marks{height:51px;display:flex;align-items:center;gap:27px;padding:0 0 0 19px;flex:none}
.marks a{display:flex;align-items:center;gap:6px}
.marks svg{width:24px;height:24px}
.ffbody{flex:1;display:flex;min-height:0}
.replit{width:1841px;border-top:1px solid #d5d5d9;border-right:1px solid #d5d5d9;background:#fcfcfc;display:flex}
.agent{width:530px;display:flex;flex-direction:column;height:1894px}
.ahead{height:61px;display:flex;align-items:center;font-size:21px;flex:none}
.rlogo{position:relative;margin:0 5px 0 24px;display:flex}
.rlogo svg{width:17px;height:28px}
.rlogo i{position:absolute;left:10px;top:-9px;width:9px;height:9px;border-radius:50%;background:#ff4b4b}
.appi{width:25px;height:24px;border:1px solid #ccc;border-radius:5px;background:#eee;margin:0 10px 0 22px;display:flex;align-items:center;justify-content:center}
.appi i{width:10px;height:10px;border-radius:50%;background:linear-gradient(90deg,#fff 50%,#333 50%);border:1px solid #888}
.cube{width:19px;height:18px;background:#5b5f66;border:3px solid #a99bff;border-radius:3px;margin-left:22px}
.ahead2{height:54px;display:flex;align-items:center;font-size:20px;flex:none}
.kk{color:#2c2f35}
.ahead2 .s22{margin-left:22px}.ttl{margin-left:59px}
.abadge{margin-left:7px;width:100px;height:36px;border-radius:18px;background:#ffe0c7;color:#8a4300;display:flex;align-items:center;gap:4px;padding-left:8px;font-size:18px}
.cm{margin-left:36px}
.chat{flex:1;overflow:hidden;padding:0 14px 0 15px;font-size:19px;position:relative}
.code{margin-left:10px;width:481px;height:288px;background:#f0f1f3;border-radius:0 0 6px 6px;font:21px/31.400px "Liberation Mono",monospace;color:#111;overflow:hidden}
.code span{display:block;padding-left:18px;margin-top:-10.500px}
.e{display:inline-block;width:27px;padding-left:2px}.e svg{width:22px;height:21px;margin-bottom:-3px}
hr{border:0;border-top:1px solid #e6e7ea;margin:0 10px}
.r1{margin-top:39px}.r2{margin-top:36px}
.l{height:34px;line-height:34px;margin-left:10px;display:flex;align-items:center}
.l.b,.l b{font-weight:600}
.em{width:22px;height:20px;margin:0 10px 0 3px}
.em.rk{margin-left:8px}
.t1{margin-top:34px}
ol{counter-reset:n;list-style:none;margin-left:0}
ol li{counter-increment:n;position:relative;padding-left:24px;margin-top:5.800px}
ol li::before{content:counter(n) ".";position:absolute;left:10px;top:4px}
ol .em{margin-left:1px;margin-right:9px}
code{font-family:"Liberation Mono",monospace;font-size:18px;color:#a35200}
.t2{margin-top:24px}.t3{margin-top:22px}
ul{list-style:none;margin-left:34px;padding-top:2px}
ul li{height:39.500px;line-height:42px;position:relative}
ul li::before{content:"";position:absolute;left:-19px;top:18px;width:6px;height:6px;border-radius:50%;background:#333}
.r2{margin-top:34px}
.t4{margin-top:38px}
.t4~.l{height:33.500px}
.commit{margin-top:19px;width:499px;height:175px;border-radius:10px;background:#f0f1f3;padding:10px 12px}
.commit .l{margin-left:0}
.ago{display:flex;align-items:center;gap:11px;color:#555;font-size:17px;height:35px}
.ago svg{width:23px;height:22px;color:#1a7f37}
.acts{display:flex;gap:12px;margin-top:7px;margin-left:0}
.acts button{height:41px;border-radius:5px;background:#e4e5e7;color:#4b4d52;font-size:17px;display:flex;align-items:center;gap:7px;padding-left:12px}
.b1{width:160px}.b2{width:120px}.b3{width:114px}
.work{margin-top:21px;width:499px;height:51px;border-radius:10px;background:#f0f1f3;display:flex;align-items:center;padding:0 14px 0 12px;gap:13px;color:#4b4d52;font-size:17.500px}
.wd{margin-left:auto}
.prompt{margin:0 0 8px 10px;width:511px;height:112px;border:1px solid #c2c3c6;border-radius:9px;padding:10px 16px;flex:none;font-size:19px}
.ph{color:#6d6f75;line-height:38px}
.prow{display:flex;align-items:center;margin:16px 0 0 -7px;color:#33363b}
.build{width:120px;height:36px;border-radius:6px;background:#f0f1f3;display:flex;align-items:center;padding-left:8px;gap:7px;margin-right:14px;font-size:18px;color:#15141a}
.build .s18{margin-left:12px}
.clip{margin-left:20px}.tune{margin-left:auto}.send{margin-left:27px;margin-right:1px}

.work-area{width:1300px;display:flex;flex-direction:column}
.rtabs{height:60px;display:flex;align-items:center;font-size:20px;color:#5f6570;flex:none}
.rt{width:157px;height:42px;margin-right:6px;border-radius:6px;display:flex;align-items:center;padding:0 14px 0 9px}
.rt.on{background:#f0f1f3;color:#15171a}
.rt>span{margin-left:9px}.rt>.s20{margin:0 2px}
.rt .s12{margin-left:auto;color:#777}
.blue{color:#24619c}.olive{color:#7a6a1a}
.rp{margin-left:13px}
.ract{margin-left:auto;display:flex;align-items:center;color:#15171a;gap:16px;margin-right:9px}
.ract .s20{margin-right:11px}
.publish{width:110px;height:42px;border-radius:6px;background:#6bb5ff;color:#0a1a2c;display:flex;align-items:center;justify-content:center;gap:6px;font-size:18px}
.frame{width:1301px;height:1826px;border:1px solid #b8babd;border-radius:6px;overflow:hidden}
.pbar{height:53px;display:flex;align-items:center;font-size:18px}
.p1{margin-left:14px}.p2{margin-left:24px}.p3{margin-left:22px}.grey{color:#777}
.purl{margin-left:13px;width:1043px;height:36px;border-radius:5px;background:#f0f1f3;display:flex;align-items:center;padding-left:6px;gap:3px;color:#15171a}
.purl svg,.purl u{color:#6d737c}
.pact{display:flex;gap:17px;margin-left:14px;color:#5f6570}

/* signals dashboard */
.app{height:1772px;background:#000;font-family:"Liberation Mono","Courier New",monospace;color:#0ff}
.hero{height:146px;background:#000a0a;border-bottom:1px solid #034a4a;position:relative;text-align:center;padding-top:38px}
.hero h1{display:flex;align-items:center;font-size:38px;line-height:44px;text-shadow:0 0 30px #00ffffb0;margin-left:222px}
.robot{width:40px;height:40px;margin:-5px 38px 0 0;filter:drop-shadow(0 0 14px #00ffff99)}
.hero p{font-size:17px;color:#078e8e;margin-top:13px;line-height:24px;margin-left:-1px}
.conn{position:absolute;left:1076px;top:30px;width:195px;height:57px;border:1px solid #00914b;border-radius:10px;background:#03302f;color:#00d96c;display:flex;align-items:center;font-size:17px;padding-left:33px;gap:16px}
.ball{width:19px;height:19px;border-radius:50%;background:radial-gradient(circle at 70% 35%,#7df0a0,#3cae66 60%,#8bbfa0)}
.stats{height:100px;background:#000606;border-bottom:1px solid #033;display:grid;grid-template-columns:repeat(3,430px);padding-left:8px;text-align:center;font-size:21px;padding-top:22px}
.stats p{font-size:15.500px;color:#057272;line-height:22px;height:28px}
.stats b{display:block;line-height:30px}
.stats b[data-w]{display:inline-block}
.stats>div{display:flex;flex-direction:column;align-items:center}
.cards{display:grid;grid-template-columns:590px 590px;gap:31px 30.500px;padding:46px 0 0 45px}
.card{height:691px;border:1.500px solid #044e4e;border-radius:22px;background:#000b0b;box-shadow:0 0 45px #00ffff33;padding:37px 37px 0 36px}
.card h2{font-size:38px;line-height:50px;text-shadow:0 0 22px #00ffff99}
.badge{display:flex;align-items:center;width:fit-content;height:63px;border:1px solid #8a2343;border-radius:12px;background:#30111b;color:#ff2f5b;padding:0 30px 0 34px;margin-top:20.500px;font-size:26px;font-weight:700;box-shadow:inset 0 0 20px #ff335511}
.badge i{width:27px;height:27px;border-radius:50%;margin-right:28px;background:radial-gradient(circle at 65% 35%,#ff4d70,#d63a52);box-shadow:0 0 12px #ff335588}
.badge.call{background:#022d1b;border-color:#00703a;color:#00e56e}
.badge.call i{background:radial-gradient(circle at 65% 35%,#5df090,#35b862);box-shadow:0 0 12px #00ff7788}
.conf{margin-top:16px;height:46px;line-height:46px;font-size:20px;color:#06a0a0;display:flex;align-items:baseline;gap:15px}
.conf b{font-size:27px;color:#0cd3d3;font-weight:700}
.quote{margin-top:17.500px;height:171px;border:1px solid #043535;border-radius:12px;background:#001515;padding:16px 18px}
.quote div{display:flex;justify-content:space-between;align-items:center;height:34px;margin-bottom:7px;font-size:18px;color:#0a9292}
.quote b{font-size:26px;color:#0ff}
.quote b.gain{color:#00f57a;text-shadow:0 0 12px #00ff7788}.quote b.lose{color:#ff2f5b;text-shadow:0 0 12px #ff335588}
.quote .state{height:47px;border:1px solid #046b3d;background:#033526;border-radius:8px;color:#00f57a;font-weight:700;justify-content:center;gap:15px;margin:6.500px 0 0;font-size:18px}
.quote .state.bad{border-color:#55202c;background:#22161b;color:#ff2f5b}
.state svg{width:20px;height:20px}
.prog{margin-top:30px;height:109px;border:1px solid #043535;border-radius:12px;background:#000508;padding:15px 15px;font-size:18px;color:#0ccfcf;font-weight:700}
.prog p{height:32px;line-height:18px}
.track{height:45px;border:1px solid #121a1a;border-radius:23px;background:#000;overflow:hidden}
.fill{height:100%;border-radius:23px;background:linear-gradient(90deg,#006b38,#00a656);box-shadow:0 0 24px #00ff7755;color:#fff;text-align:center;line-height:43px;font-size:18px}
.fill.put{background:linear-gradient(90deg,#6a1e2b,#9d2a40);box-shadow:0 0 24px #ff335544}
.timer{text-align:center;font-size:44px;font-weight:700;margin-top:19px;line-height:60px;text-shadow:0 0 30px #00ffff99}

.ffside{flex:1;display:flex;flex-direction:column;align-items:center;padding-top:21px;gap:29px;padding-bottom:21px}
.spk{position:relative}.spk i{position:absolute;right:-8px;top:-8px;width:9px;height:9px;border-radius:50%;background:#2ac3a2}
.cog{margin-top:auto}

/* taskbar */
.taskbar{height:70px;flex:none;display:flex;align-items:center;background:linear-gradient(90deg,#dededf,#d8d9dc 40%,#dadbdd);color:#1b1b1b;font-size:17px}
.weather{display:flex;align-items:center;width:678px;padding-left:28px;position:relative}
.weather>svg{width:42px;height:42px;margin-right:6px}
.weather em{position:absolute;left:46px;top:-1px;width:24px;height:24px;border-radius:50%;background:#c42b1c;color:#fff;font-size:16px;line-height:24px;text-align:center}
.temp{display:flex;flex-direction:column;align-items:flex-start}
.temp p{line-height:25px}.sub{color:#555}
.start{width:35px;height:35px}
.find{margin-left:22px;width:326px;height:46px;border-radius:23px;background:#f3f3f4;border:1px solid #c9cacc;display:flex;align-items:center;padding:0 4px 0 15px}
.find span{margin-left:16px;color:#5c5c5c;font-size:18px}
.pic{width:74px;height:40px;margin-left:auto}
.pins{display:flex;margin-left:4.500px}
.pins span{width:66.010px;height:70px;display:flex;align-items:center;justify-content:center;position:relative}
.pins svg{width:36px;height:36px;position:relative}
.pins .run::after{content:"";position:absolute;bottom:6px;width:9px;height:5px;border-radius:3px;background:#777}
.act::before,.alert::before{content:"";position:absolute;left:6px;top:6px;width:55px;height:58px;border-radius:6px;background:#eff0f2}
.alert::before{background:#ecb0ac;width:59px;left:3px;top:5px;height:60px}
.act::after,.alert::after{content:"";position:absolute;bottom:6px;width:25px;height:5px;border-radius:3px;background:#0b76d1}
.alert::after{width:48px;background:#c42b1c}
.tray{margin-left:auto;display:flex;align-items:center;padding-right:29px}
.od{margin:0 31px 0 27px}.wf{margin:0 11px 0 30px}
.when{margin-left:25px;width:84px;display:flex;flex-direction:column;align-items:flex-end;line-height:26px}
```
FILE: app.js
```js
// Bars, buys and sells are stored on a grid; origin and k map it to screen pixels.
// bar: [x, bodyTop, bodyBottom, wickTop, wickBottom, up]
const GREY = '#8a8a8a', RED = '#f23645', TEAL = '#089981', NAVY = '#162e63', BLUE = '#3d6bff';
const charts = {
  eurusd: {
    box: [92, 126, 873, 912], axis: 863.5, base: 992, edge: 955, origin: [0, 520], k: [.6186, .3444], w: 34,
    cross: 615.5, bolt: 970.5, boltX: 561.7, digits: 879,
    grid: [144.3, 207.5, 271.4, 335.4, 398.5, 462.2, 525.5, 589.6, 653.3, 716.3, 780.4, 844.4, 907.5, 971.5],
    labels: [[207.5, '1,16850'], [271.4, '1,16800'], [335.4, '1,16750'], [398.5, '1,16700'], [462.2, '1,16650'], [589.6, '1,16550'], [653.3, '1,16500'], [780.4, '1,16400'], [844.4, '1,16350'], [907.5, '1,16300'], [971.5, '1,16250']],
    times: [[119, 86, '07:00 PM', 1], [282, 80, '07:30 PM'], [438.6, 88, '08:00 PM', 1], [758, 86, '09:00 PM', 1]], stamp: 487,
    lines: [[527.3, GREY], [697.4, RED], [700.8, '#9c4bd0'], [705.3, GREY]],
    tags: [[782, 513, 28.6, NAVY, 'Máximo', '1,16599'], [779, 686, 28.6, RED, 'EURUSD', '1,16463', '01:50'], [785, 737, 28.6, NAVY, 'Mínimo', '1,16459']],
    bars: [[177, 33, 35, 24, 46, 1], [221, 32, 44, 20, 55], [263, 41, 131, 38, 131], [306, 107, 130, 61, 130, 1], [350, 107, 134, 107, 136], [392, 131, 229, 128, 250], [436, 204, 228, 197, 256, 1], [478, 157, 206, 131, 209, 1], [521, 157, 163, 145, 174], [565, 160, 206, 160, 241], [607, 168, 206, 157, 218, 1], [650, 120, 170, 107, 241, 1], [693, 119, 177, 64, 177], [736, 174, 287, 157, 287], [780, 285, 328, 276, 392], [822, 325, 497, 322, 514], [866, 486, 496, 470, 537, 1], [908, 485, 526, 470, 526]],
    buys: [[306, 189]],
    sells: [[350, 46], [392, 63], [521, 84], [565, 98], [693, 3], [736, 94], [780, 212], [822, 262], [908, 409]]
  },
  gbpusd: {
    box: [969, 126, 871, 912], axis: 1738, edge: 1830, base: 992, origin: [960, 0], k: [.6186, .3444], w: 37,
    cross: 1185.5, bolt: 970.5, boltX: 1126, digits: 1754, gear: 1789,
    grid: [176.3, 247.3, 317.2, 387.5, 458.4, 528.3, 598.7, 669, 739.5, 810, 880, 950.5],
    labels: [[176.3, '1,34300'], [247.3, '1,34280'], [317.2, '1,34260'], [387.5, '1,34240'], [458.4, '1,34220'], [528.3, '1,34200'], [598.7, '1,34180'], [669, '1,34160'], [739.5, '1,34140'], [880, '1,34100'], [950.5, '1,34080']],
    times: [[994, 88, '08:00 PM', 1], [1348, 86, '09:00 PM', 1], [1528, 80, '09:30 PM'], [1704, 88, '10:00 PM', 1]], stamp: 1057,
    lines: [[303.5, GREY], [749, RED], [774, GREY]],
    tags: [[1657, 289, 28.6, NAVY, 'Máximo', '1,34264'], [1654, 736, 28.6, RED, 'GBPUSD', '1,34137', '01:50'], [1660, 787, 28.6, NAVY, 'Mínimo', '1,34130']],
    bars: [[30, 952, 1292, 883, 1292], [78, 1289, 1495, 1237, 1561], [126, 1472, 1483, 1379, 1680, 1], [174, 1481, 2131, 1481, 2131], [222, 2131, 2134, 2065, 2245, 1], [269, 2125, 2175, 2105, 2195]],
    buys: [[126, 1707]], sells: [], extra: [[-10, 1395, 'COMPRA']]
  },
  usdjpy: {
    box: [92, 1042, 873, 912], axis: 863.5, base: 1909.5, edge: 955, origin: [0, 1040], k: [.6186, .3444], w: 37,
    cross: 603.3, bolt: 1887.8, boltX: 545.6, digits: 879, logo: 1,
    grid: [1096.5, 1172.3, 1247.3, 1322.4, 1397.5, 1472.2, 1547.3, 1622.5, 1697.5, 1772, 1847.5],
    labels: [[1096.5, '153,200'], [1172.3, '153,000'], [1247.3, '152,800'], [1322.4, '152,600'], [1397.5, '152,400'], [1472.2, '152,200'], [1547.3, '152,000'], [1697.5, '151,600'], [1772, '151,400'], [1847.5, '151,200']],
    times: [[67, 86, '07:00 PM', 1], [244, 80, '07:30 PM'], [415, 90, '08:00 PM', 1], [763, 86, '09:00 PM', 1]], stamp: 476,
    lines: [[1425.4, GREY], [1435.4, RED], [1437.4, BLUE], [1623.3, GREY]],
    tags: [[782, 1395.4, 28.6, NAVY, 'Máximo', '152,326'], [782, 1424, 28, TEAL, 'USDJPY', '152,294', '01:50'], [785, 1609, 28.6, NAVY, 'Mínimo', '151,797']],
    bars: [[180, 1593, 1672, 1588, 1691, 1], [227, 1520, 1593, 1516, 1636, 1], [274, 1519, 1522, 1514, 1562], [319, 1482, 1523, 1482, 1541, 1], [366, 1459, 1483, 1371, 1483, 1], [413, 1458, 1522, 1455, 1559], [460, 1456, 1521, 1452, 1548, 1], [507, 1455, 1469, 1440, 1501], [553, 1466, 1498, 1443, 1507], [600, 1494, 1497, 1423, 1503, 1], [647, 1453, 1494, 1434, 1516, 1], [694, 1409, 1454, 1394, 1478, 1], [741, 1249, 1410, 1228, 1410, 1], [788, 1122, 1250, 1118, 1250, 1], [835, 1121, 1191, 1121, 1231], [882, 1154, 1190, 1124, 1190, 1]],
    buys: [[180, 1756], [227, 1698], [319, 1603], [366, 1542], [460, 1611], [600, 1565], [647, 1579], [694, 1542], [741, 1470], [788, 1312], [882, 1249]], sells: []
  },
  eurjpy: {
    box: [969, 1042, 871, 912], axis: 1738, edge: 1830, base: 1909.5, origin: [960, 1040], k: [.6186, .3444], w: 24,
    cross: 1522.5, hcross: 1666.3, bolt: 1887.8, boltX: 1482, digits: 1754, gear: 1789,
    grid: [1073.4, 1147.5, 1221.2, 1295.2, 1369.2, 1443, 1517.3, 1591.3, 1739.4, 1813.2, 1887.4],
    labels: [[1147.5, '177,700'], [1221.2, '177,600'], [1295.2, '177,500'], [1369.2, '177,400'], [1443, '177,300'], [1517.3, '177,200'], [1591.3, '177,100'], [1739.4, '176,900'], [1813.2, '176,800'], [1887.4, '176,700']],
    times: [[1022, 80, '06:30 PM'], [1139, 86, '07:00 PM', 1], [1262, 80, '07:30 PM'], [1379, 86, '08:00 PM', 1], [1619, 86, '09:00 PM', 1]], stamp: 1394,
    lines: [[1345.5, GREY], [1380.3, RED], [1394.4, TEAL], [1402.3, BLUE], [1708.6, GREY]],
    tags: [[1657, 1331, 28.6, NAVY, 'Máximo', '177,433'], [1657, 1380, 28.6, TEAL, 'EURJPY', '177,367', '01:50'], [1703, 1649, 35, '#434343', '', '176,999'], [1660, 1694, 28.6, NAVY, 'Mínimo', '176,942']],
    bars: [[36, 1824, 1915, 1813, 1941, 1], [69, 1749, 1828, 1695, 1874, 1], [101, 1726, 1750, 1704, 1760, 1], [133, 1725, 1742, 1698, 1753], [166, 1671, 1744, 1611, 1744, 1], [198, 1670, 1768, 1666, 1768], [230, 1707, 1767, 1707, 1767, 1], [263, 1698, 1728, 1696, 1740], [295, 1717, 1745, 1717, 1766], [327, 1745, 1797, 1713, 1797], [360, 1688, 1793, 1673, 1847, 1], [392, 1494, 1689, 1490, 1751, 1], [424, 1501, 1519, 1498, 1605], [457, 1519, 1522, 1478, 1573], [489, 1430, 1523, 1260, 1523, 1], [521, 1429, 1545, 1429, 1628], [554, 1395, 1543, 1385, 1615, 1], [586, 1391, 1463, 1373, 1524], [618, 1449, 1498, 1420, 1524], [650, 1441, 1511, 1376, 1533, 1], [683, 1392, 1444, 1342, 1490, 1], [715, 1388, 1405, 1359, 1446], [747, 1070, 1404, 1045, 1404, 1], [780, 933, 1071, 886, 1103, 1], [812, 932, 1071, 926, 1161], [844, 1029, 1073, 944, 1073, 1]],
    buys: [[36, 2003], [69, 1932], [101, 1822], [166, 1806], [230, 1827], [360, 1908], [392, 1815], [457, 1637], [489, 1582], [554, 1675], [650, 1594], [683, 1550], [747, 1466], [780, 1167], [844, 1132]], sells: []
  }
};

function draw(svg, c, id) {
  const [bx, by, bw, bh] = c.box, X = x => c.origin[0] + x * c.k[0], Y = y => c.origin[1] + y * c.k[1];
  const text = (x, y, s, cls = '', len = 0, more = '') => `<text x="${x}" y="${y}" class="${cls}" ${len ? `textLength="${len}"` : ''} ${more}>${s}</text>`;
  let h = `<clipPath id="c-${id}"><rect x="${bx}" y="${by}" width="${c.axis - bx}" height="${bh}"/></clipPath><g clip-path="url(#c-${id})">`;
  c.grid.forEach(y => h += `<path d="M${bx} ${y}H${c.axis}" stroke="#1d1d1d"/>`);
  c.lines.forEach(([y, col]) => h += `<path d="M${bx} ${y}H${c.axis}" stroke="${col}" stroke-dasharray="1.2 1.8"/>`);
  const tri = (x, y, dir, col) => `<path d="M${x} ${y}l-13 ${25.3 * dir}h26z" fill="${col}"/>`;
  c.buys.forEach(([x, y]) => { h += tri(X(x), Y(y), 1, '#4caf50') + text(X(x) - 36.5, Y(y) + 59.5, 'COMPRA', 'sig', 73); });
  c.sells.forEach(([x, y]) => { h += tri(X(x), Y(y), -1, '#ff5252') + text(X(x) - 28.5, Y(y) - 45.5, 'VENDE', 'sig', 57); });
  (c.extra || []).forEach(([x, y, s]) => h += text(X(x) - 36.5, Y(y) + 7, s, 'sig', 73));
  const hw = c.w * c.k[0] / 2;
  c.bars.forEach(([x, t, b, wt, wb, up]) => {
    const cx = X(x), col = up ? TEAL : RED, T = Y(t), B = Math.max(Y(b), Y(t) + 1.5);
    h += `<path d="M${cx} ${Y(wt)}V${T}M${cx} ${B}V${Y(wb)}" stroke="${col}" stroke-width="1.2"/>`;
    h += up ? `<rect x="${cx - hw + .6}" y="${T + .6}" width="${2 * hw - 1.2}" height="${B - T - 1.2 > 0 ? B - T - 1.2 : .5}" fill="#0f0f0f" stroke="${col}" stroke-width="1.3"/>`
            : `<rect x="${cx - hw}" y="${T}" width="${2 * hw}" height="${B - T}" fill="${col}"/>`;
  });
  h += `<path d="M${c.cross} ${by}V${c.base}" stroke="#9c9c9c" stroke-dasharray="5.500 5.500"/>`;
  if (c.hcross) h += `<path d="M${bx} ${c.hcross}H1703" stroke="#9c9c9c" stroke-dasharray="5.500 5.500"/>`;
  h += `<circle cx="${c.boltX}" cy="${c.bolt}" r="16.500" fill="#0f0f0f" stroke="#ab47bc" stroke-width="2"/><path d="M${c.boltX + 3} ${c.bolt - 9}l-8 10h10l-8 9" fill="none" stroke="#ab47bc" stroke-width="2.200"/>`;
  c.times.forEach(([x, w, s, b]) => h += text(x, c.base + 29, s, '', w, b ? 'font-weight="600"' : ''));
  if (c.logo) h += `<use href="#tv" x="111" y="1856" width="50" height="39" color="#dbdbdb"/>`;
  h += `</g><path d="M${bx} ${c.base}H${bx + bw}M${c.axis} ${by}V${by + bh}" stroke="#575757"/>`;
  c.labels.forEach(([y, s]) => h += text(c.digits, y + 5.500, s, '', 68.500));
  h += `<rect x="${c.axis + 4}" y="${by}" width="90" height="52" fill="#0f0f0f"/>`;
  c.tags.forEach(([x, y, th, col, name, price, cd]) => {
    h += `<rect x="${x}" y="${y}" width="${c.axis - x}" height="${th}" rx="2" fill="${col}"/><rect x="${c.axis}" y="${y}" width="${c.edge - c.axis}" height="${cd ? 51 : th}" rx="2" fill="${col}"/><path d="M${c.axis} ${y}v${th}" stroke="#575757"/>`;
    h += text(c.axis - 7, y + 21.500, name, 'w', 0, 'text-anchor="end"') + text(c.digits, y + th / 2 + 5.500, price, 'pw', 68.500);
    if (cd) h += text(c.digits, y + 42.500, cd, 'cd', 48);
    if (!name) h += `<circle cx="1720" cy="${y + 17.500}" r="12" fill="none" stroke="#e0e0e0"/><path d="M1714 ${y + 17.500}h12M1720 ${y + 11.500}v12" stroke="#e0e0e0"/>`;
  });
  h += `<path d="M${c.stamp} ${c.base}h255.500v36q0 3 -3 3h-249.500q-3 0 -3 -3z" fill="#434343"/>` + text(c.stamp + 15, c.base + 29, "mar 07 Oct '25", 'w', 128) + text(c.stamp + 161, c.base + 29, '08:25 PM', 'w', 81);
  if (c.gear) h += `<path d="M1777 ${c.base + 24}l6 -10h12l6 10l-6 10h-12z" fill="none" stroke="#c0c0c0" stroke-width="1.700"/><circle cx="1789" cy="${c.base + 24}" r="4" fill="none" stroke="#c0c0c0" stroke-width="1.700"/>`;
  svg.setAttribute('viewBox', c.box.join(' '));
  svg.innerHTML = h;
}
document.querySelectorAll('[data-chart]').forEach(s => draw(s, charts[s.dataset.chart], s.dataset.chart));

const signals = [
  { pair: 'EURUSD', side: 'PUT', conf: 43, entry: '1.16470', now: '1.16465', gain: true, left: '0:38' },
  { pair: 'GBPUSD', side: 'CALL', conf: 49, entry: '1.34153', now: '1.34137', gain: false, left: '0:38' },
  { pair: 'USDJPY', side: 'CALL', conf: 61, entry: '152.31500', now: '152.30700', gain: false, left: '0:38' },
  { pair: 'EURJPY', side: 'CALL', conf: 57, entry: '177.40500', now: '177.38600', gain: false, left: '0:39' }
];
document.getElementById('cards').innerHTML = signals.map(s => {
  const call = s.side === 'CALL', w = s.entry.length * 16.9;
  return `<article class="card"><h2><span data-w="151">${s.pair}</span></h2>
  <div class="badge ${call ? 'call' : ''}"><i></i><span data-w="${call ? 77 : 58}">${s.side}</span></div>
  <p class="conf"><span data-w="125">Confianza:</span><b data-w="52">${s.conf}%</b></p>
  <div class="quote"><div><span data-w="86">Entrada:</span><b data-w="${w}">${s.entry}</b></div><div><span data-w="75">Actual:</span><b class="${s.gain ? 'gain' : 'lose'}" data-w="${w}">${s.now}</b></div>
  <div class="state ${s.gain ? '' : 'bad'}"><svg><use href="#${s.gain ? 'ok' : 'warn'}"/></svg><span data-w="${s.gain ? 82 : 106}">${s.gain ? 'GANANDO' : 'PERDIENDO'}</span></div></div>
  <div class="prog"><p><span data-w="205">ENTRADA EN CURSO...</span></p><div class="track"><div class="fill ${call ? '' : 'put'}" style="width:87%">87%</div></div></div>
  <div class="timer"><span data-w="112">${s.left}</span></div></article>`;
}).join('');

// Spread each label over its design width.
document.querySelectorAll('[data-w]').forEach(el => {
  const gap = (+el.dataset.w - el.getBoundingClientRect().width) / el.textContent.length;
  el.style.letterSpacing = gap.toFixed(3) + 'px';
});
```
